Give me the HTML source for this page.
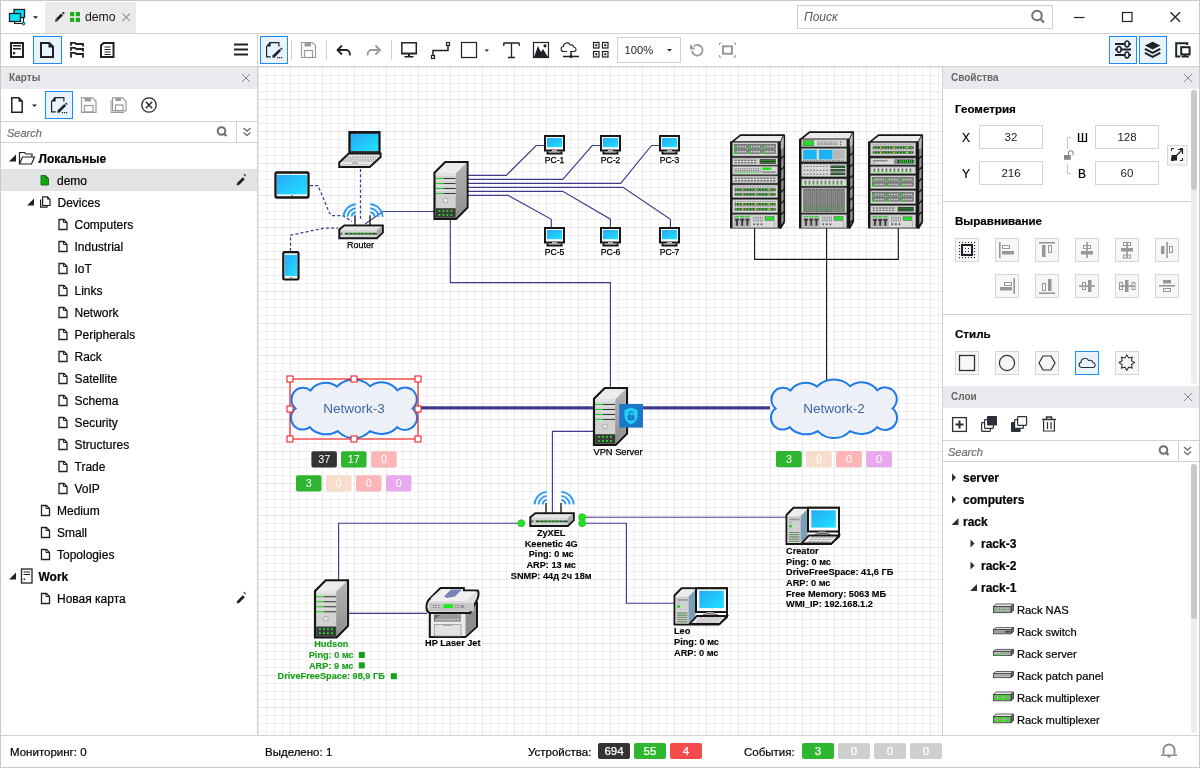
<!DOCTYPE html>
<html><head><meta charset="utf-8">
<style>
*{box-sizing:border-box;margin:0;padding:0}
html,body{width:1200px;height:768px;overflow:hidden;background:#fff}
body{will-change:transform;position:relative;font-family:"Liberation Sans",sans-serif;color:#1b1b1b;font-size:12px}
.a{position:absolute}
svg.a{overflow:visible}
.hl{position:absolute;height:1px;background:#d2d2d2}
.vl{position:absolute;width:1px;background:#d2d2d2}
.btnsel{position:absolute;border:1px solid #1a8cff;background:#e9f3fd}
.ph{position:absolute;background:#e8eaed;height:22px;font-weight:bold;font-size:10px;color:#666;line-height:22px;padding-left:8px}
.t{position:absolute;white-space:nowrap;font-size:12px;line-height:14px;color:#000;-webkit-text-stroke-width:0.2px}
.badge{position:absolute;height:16px;border-radius:2px;color:#fff;font-size:11.5px;line-height:17px;text-align:center;-webkit-text-stroke-width:0.25px}
#canvas{position:absolute;left:258px;top:67px;width:684px;height:668px;overflow:hidden;
background-color:#fff;
background-image:linear-gradient(to right,rgba(0,0,0,.03) 1px,transparent 1px),linear-gradient(to bottom,rgba(0,0,0,.03) 1px,transparent 1px),linear-gradient(to right,rgba(0,0,0,.05) 1px,transparent 1px),linear-gradient(to bottom,rgba(0,0,0,.05) 1px,transparent 1px);
background-size:32px 32px,32px 32px,8px 8px,8px 8px}
</style></head><body>
<!-- window border -->
<div class="a" style="left:0;top:0;width:1200px;height:768px;border:1px solid #c9c9c9;z-index:50;pointer-events:none"></div>

<!-- ===== title bar ===== -->
<div class="hl" style="left:0;top:33px;width:1200px"></div>
<svg class="a" style="left:0;top:0" width="45" height="33">
 <rect x="14" y="9.5" width="10.5" height="8" fill="#00e5ff" stroke="#1b1b1b" stroke-width="1.3"/>
 <rect x="9.5" y="13.5" width="11" height="8" fill="#00e5ff" stroke="#1b1b1b" stroke-width="1.3"/>
 <path d="M23.5 18v5.5H14.5V22" fill="none" stroke="#1b1b1b" stroke-width="1.1"/>
 <circle cx="23.5" cy="23.5" r="1.4" fill="#00e5ff" stroke="#1b1b1b" stroke-width="0.8"/>
 <path d="M33 16.2h5l-2.5 2.6z" fill="#1b1b1b"/>
</svg>
<div class="a" style="left:45px;top:2px;width:91px;height:31px;background:#ebebeb"></div>
<svg class="a" style="left:45px;top:2px" width="91" height="31">
 <path d="M12 17.5L17 12.5" stroke="#1e2228" stroke-width="2.7"/>
 <path d="M10 19.8L10.8 16.6L13.2 19Z" fill="#1e2228"/>
 <path d="M17.8 11.7L19 10.5" stroke="#1e2228" stroke-width="2.4"/>
 <rect x="25" y="10" width="4.2" height="4.2" fill="#1aab1a"/><rect x="30.8" y="10" width="4.2" height="4.2" fill="#1aab1a"/>
 <rect x="25" y="15.8" width="4.2" height="4.2" fill="#1aab1a"/><rect x="30.8" y="15.8" width="4.2" height="4.2" fill="#1aab1a"/>
 <path d="M77.5 11.5l7.5 7.5M85 11.5l-7.5 7.5" stroke="#9a9a9a" stroke-width="1.1"/>
</svg>
<div class="a" style="left:85px;top:8.8px;font-size:12.2px;line-height:16px;color:#111">demo</div>
<div class="a" style="left:797px;top:5px;width:256px;height:24px;border:1px solid #cfcfcf;background:#fff"></div>
<div class="a" style="left:804px;top:10px;font-size:12px;line-height:14px;color:#555;font-style:italic">Поиск</div>
<svg class="a" style="left:1020px;top:0" width="180" height="33">
 <circle cx="17" cy="15.5" r="4.8" fill="none" stroke="#707070" stroke-width="2"/>
 <path d="M20.5 19l3.5 3.5" stroke="#707070" stroke-width="2.2"/>
 <path d="M54 17.5h10.5" stroke="#1e2228" stroke-width="1.2"/>
 <rect x="102.5" y="12.5" width="9.5" height="9" fill="none" stroke="#1e2228" stroke-width="1.2"/>
 <path d="M150.5 12.2l9.5 9.5M160 12.2l-9.5 9.5" stroke="#1e2228" stroke-width="1.3"/>
</svg>

<!-- ===== toolbar ===== -->
<div class="hl" style="left:0;top:66px;width:1200px"></div>
<div class="vl" style="left:257px;top:33px;height:703px"></div>
<div class="vl" style="left:942px;top:66px;height:670px"></div>
<div class="btnsel" style="left:33px;top:36px;width:29px;height:28px"></div>
<svg class="a" style="left:0;top:34px" width="257" height="32">
 <g fill="none" stroke="#1e2228" stroke-width="2">
  <rect x="11" y="9" width="12" height="14"/>
 </g>
 <path d="M13 11h8v1.6h-8zM13 14h8v1.6h-8zM13 18h2.2v2.2h-2.2z" fill="#1e2228"/>
 <path d="M41 9h8l4 4v10h-12z" fill="none" stroke="#1e2228" stroke-width="2"/>
 <path d="M48.5 8.5h1.5l3.5 3.5v1.5h-5z" fill="#1e2228"/>
 <path d="M71 11.8V8.9H75L76.2 10H83V12.6M71 16.8V13.9H75L76.2 15H83V17.6M71 23.8V18.9H75L76.2 20H83V23.8" fill="none" stroke="#1e2228" stroke-width="1.8"/>
 <path d="M103.5 9h10v14h-12.5v-11.5z" fill="none" stroke="#1e2228" stroke-width="2"/>
 <path d="M104.5 13h6M104.5 15.5h6M104.5 18h6M104.5 20.5h6" stroke="#1e2228" stroke-width="1"/>
 <path d="M234 10.5h14M234 15.5h14M234 20.5h14" stroke="#1e2228" stroke-width="2"/>
</svg>
<div class="btnsel" style="left:260px;top:36px;width:28px;height:28px"></div>
<svg class="a" style="left:258px;top:34px" width="684" height="32">
 <!-- edit doc -->
 <path d="M8.6 12V22.9H12.7M11.5 8.6H20.9V12.6" fill="none" stroke="#1e2228" stroke-width="1.15"/>
 <path d="M8.1 12.2L11.7 8.1H12.6V12.6H8.1Z" fill="#1e2228"/>
 <path d="M15.3 22.8L22.2 15.9" stroke="#1e2228" stroke-width="2.7"/>
 <path d="M14.3 23.8L14.6 21.5L16.6 23.5Z" fill="#1e2228"/>
 <path d="M22.9 15.2L23.9 14.2" stroke="#1e2228" stroke-width="2.2"/>
 <path d="M19 23h1.2v1.2h-1.2zM21 23h1.2v1.2h-1.2zM23 23h1.2v1.2h-1.2z" fill="#1e2228"/>
 <!-- seps -->
 <path d="M33.5 6v20M68.5 6v20M133.5 6v20" stroke="#cfcfcf" stroke-width="1"/>
 <!-- save -->
 <path d="M43.5 8.5h11l3 3v12h-14z" fill="none" stroke="#9a9a9a" stroke-width="1.2"/>
 <rect x="46.5" y="8.5" width="6.5" height="4" fill="#9a9a9a"/>
 <rect x="46.5" y="16.5" width="8" height="7" fill="none" stroke="#9a9a9a" stroke-width="1.2"/>
 <!-- undo -->
 <path d="M84 11.5l-4.5 4.5 4.5 4.5" fill="none" stroke="#1e2228" stroke-width="1.8"/>
 <path d="M79.5 16h8.5a3.8 3.8 0 0 1 3.8 3.8v1.8" fill="none" stroke="#1e2228" stroke-width="1.8"/>
 <!-- redo -->
 <path d="M117.5 11.5l4.5 4.5-4.5 4.5" fill="none" stroke="#9a9a9a" stroke-width="1.8"/>
 <path d="M122 16h-8.5a3.8 3.8 0 0 0-3.8 3.8v1.8" fill="none" stroke="#9a9a9a" stroke-width="1.8"/>
 <!-- monitor -->
 <rect x="143.8" y="8.8" width="14.5" height="10.5" fill="none" stroke="#1e2228" stroke-width="1.5"/>
 <path d="M143 19h16v1.5h-16zM150 20h2v2h-2zM146.5 22h9v1.6h-9z" fill="#1e2228"/>
 <!-- connector -->
 <rect x="188.5" y="8.5" width="3" height="3" fill="none" stroke="#1e2228" stroke-width="1.2"/>
 <rect x="173.5" y="21.5" width="3" height="3" fill="none" stroke="#1e2228" stroke-width="1.2"/>
 <path d="M190 12v4.5h-15v5" fill="none" stroke="#1e2228" stroke-width="1.5"/>
 <!-- rect -->
 <rect x="203.5" y="8.5" width="15" height="15" fill="none" stroke="#1e2228" stroke-width="1.2"/>
 <path d="M226.5 15.5h4.5l-2.25 2.3z" fill="#1e2228"/>
 <!-- T -->
 <path d="M245.5 9h16M253.5 9v14.5M250 23.5h7M245.8 9v3M261.2 9v3" fill="none" stroke="#1e2228" stroke-width="1.3"/>
 <!-- image -->
 <rect x="275.5" y="8.5" width="15" height="15" fill="none" stroke="#1e2228" stroke-width="1.2"/>
 <path d="M276 23l4-11 3 6 2-3 5 8z" fill="#1e2228"/>
 <circle cx="287" cy="11.8" r="1.6" fill="#1e2228"/>
 <!-- cloud net -->
 <path d="M309 17.5h-3.2a2.5 2.5 0 0 1-0.3-5 3.5 3.5 0 0 1 6.7-1.5 2.8 2.8 0 0 1 3.6 2.3 2.1 2.1 0 0 1 0.2 4.2h-3.2" fill="none" stroke="#1e2228" stroke-width="1.1"/>
 <path d="M305 22.5h16M313 17v5.5" stroke="#1e2228" stroke-width="1.5"/>
 <circle cx="313" cy="22.5" r="1.5" fill="#1e2228"/>
 <!-- grid -->
 <g fill="none" stroke="#1e2228" stroke-width="1.2">
  <rect x="335.5" y="8.5" width="5.5" height="5.5"/><rect x="344.5" y="8.5" width="5.5" height="5.5"/>
  <rect x="335.5" y="17.5" width="5.5" height="5.5"/><rect x="344.5" y="17.5" width="5.5" height="5.5"/>
 </g>
 <path d="M337.3 10.3h2v2h-2zM346.3 10.3h2v2h-2zM337.3 19.3h2v2h-2zM346.3 19.3h2v2h-2z" fill="#1e2228"/>
 <!-- rotate -->
 <path d="M434 17a5.3 5.3 0 1 0 1.8-4.8" fill="none" stroke="#9a9a9a" stroke-width="1.8"/>
 <path d="M432 10v5.5h5.5z" fill="#9a9a9a"/>
 <!-- fit -->
 <path d="M461.5 11v-2h2M475.5 9h2v2M477.5 21v2h-2M463.5 23h-2v-2" fill="none" stroke="#9a9a9a" stroke-width="1"/>
 <rect x="465" y="12.3" width="9" height="7.4" fill="none" stroke="#9a9a9a" stroke-width="2"/>
</svg>
<div class="a" style="left:617px;top:37px;width:64px;height:26px;border:1px solid #cfcfcf;background:#fff"></div>
<div class="a" style="left:624.5px;top:43px;font-size:11.2px;line-height:15px;color:#222">100%</div>
<svg class="a" style="left:660px;top:44px" width="20" height="10"><path d="M7 5h5l-2.5 2.5z" fill="#1e2228"/></svg>
<div class="btnsel" style="left:1109px;top:36px;width:28px;height:28px"></div>
<div class="btnsel" style="left:1139px;top:36px;width:28px;height:28px"></div>
<svg class="a" style="left:1100px;top:34px" width="100" height="32">
 <path d="M15 10H31M15 15.5H31M15 21H31" stroke="#1e2228" stroke-width="1.8"/>
 <ellipse cx="27" cy="10" rx="2.1" ry="2.9" fill="#e9f3fd" stroke="#1e2228" stroke-width="1.5"/>
 <ellipse cx="19" cy="15.5" rx="2.1" ry="2.9" fill="#e9f3fd" stroke="#1e2228" stroke-width="1.5"/>
 <ellipse cx="27" cy="21" rx="2.1" ry="2.9" fill="#e9f3fd" stroke="#1e2228" stroke-width="1.5"/>
 <path d="M44.9 11.4L52.6 7.8L60.3 11.4L52.6 15.4Z" fill="#1e2228"/>
 <path d="M44.9 14.9L52.6 18.9L60.3 14.9M44.9 18.9L52.6 22.9L60.3 18.9" fill="none" stroke="#1e2228" stroke-width="2"/>
 <path d="M80.2 22.6H76.2V9.2H87.2V11" fill="none" stroke="#1e2228" stroke-width="2"/>
 <rect x="81.2" y="13.2" width="8.4" height="7.2" fill="none" stroke="#1e2228" stroke-width="2"/>
 <path d="M85 20.6V22M81.5 22.6H88.8" fill="none" stroke="#1e2228" stroke-width="2"/>
</svg>
<!-- left panel -->
<div class="ph" style="left:1px;top:67px;width:256px">Карты</div>
<div class="btnsel" style="left:45px;top:91px;width:28px;height:28px"></div>
<svg class="a" style="left:0;top:89px" width="257" height="33">
 <path d="M11.8 8.8h7l3.4 3.4v11h-10.4z" fill="none" stroke="#1e2228" stroke-width="1.5"/>
 <path d="M18.5 8.5h0.6l3.3 3.3v0.9h-3.9z" fill="#1e2228"/>
 <path d="M32 15.5h5l-2.5 2.5z" fill="#1e2228"/>
 <path d="M51.6 12V22.9H55.7M54.5 8.6H63.9V12.6" fill="none" stroke="#1e2228" stroke-width="1.15"/>
 <path d="M51.1 12.2L54.7 8.1H55.6V12.6H51.1Z" fill="#1e2228"/>
 <path d="M58.3 22.8L65.2 15.9" stroke="#1e2228" stroke-width="2.7"/>
 <path d="M57.3 23.8L57.6 21.5L59.6 23.5Z" fill="#1e2228"/>
 <path d="M65.9 15.2L66.9 14.2" stroke="#1e2228" stroke-width="2.2"/>
 <path d="M62 23h1.2v1.2h-1.2zM64 23h1.2v1.2h-1.2zM66 23h1.2v1.2h-1.2z" fill="#1e2228"/>
 <path d="M81.5 8.8h11l3.5 3.5v11h-14.5z" fill="none" stroke="#9a9a9a" stroke-width="1.2"/>
 <rect x="84.5" y="9" width="6.5" height="3.5" fill="#9a9a9a"/>
 <rect x="84.5" y="16.5" width="8.5" height="6.5" fill="none" stroke="#9a9a9a" stroke-width="1.2"/>
 <path d="M112.5 8.8h10l3.5 3.5v9.5h-13.5z" fill="none" stroke="#9a9a9a" stroke-width="1.2"/>
 <path d="M111 11v12.5h13" fill="none" stroke="#9a9a9a" stroke-width="1"/>
 <rect x="115.5" y="9" width="5.5" height="3" fill="#9a9a9a"/>
 <rect x="115.5" y="16" width="7.5" height="5.5" fill="none" stroke="#9a9a9a" stroke-width="1.2"/>
 <circle cx="149" cy="16" r="7.2" fill="none" stroke="#1e2228" stroke-width="1.3"/>
 <path d="M145.8 12.8l6.4 6.4M152.2 12.8l-6.4 6.4" stroke="#1e2228" stroke-width="1.4"/>
</svg>
<div class="hl" style="left:1px;top:121px;width:256px"></div>
<div class="t" style="left:7px;top:126px;font-style:italic;color:#6e6e6e;font-size:11px">Search</div>
<svg class="a" style="left:200px;top:122px" width="57" height="21">
 <circle cx="21.5" cy="9" r="3.8" fill="none" stroke="#6f6f6f" stroke-width="2"/>
 <path d="M24 11.5l2.5 2.5" stroke="#6f6f6f" stroke-width="2.2"/>
 <path d="M36.5 0v21" stroke="#d2d2d2" stroke-width="1"/>
 <path d="M43.5 6l3.5 3 3.5-3M43.5 10.5l3.5 3 3.5-3" fill="none" stroke="#6f6f6f" stroke-width="1.4"/>
</svg>
<div class="hl" style="left:1px;top:142px;width:256px"></div>
<div class="a" style="left:1px;top:169px;width:256px;height:22px;background:#e3e3e3"></div>
<div class="t" style="left:38.5px;top:152px;font-weight:bold;">Локальные</div>
<div class="t" style="left:57px;top:174px;">demo</div>
<div class="t" style="left:57.5px;top:196px;">Devices</div>
<div class="t" style="left:74.5px;top:218px;">Computers</div>
<div class="t" style="left:74.5px;top:240px;">Industrial</div>
<div class="t" style="left:74.5px;top:262px;">IoT</div>
<div class="t" style="left:74.5px;top:284px;">Links</div>
<div class="t" style="left:74.5px;top:306px;">Network</div>
<div class="t" style="left:74.5px;top:328px;">Peripherals</div>
<div class="t" style="left:74.5px;top:350px;">Rack</div>
<div class="t" style="left:74.5px;top:372px;">Satellite</div>
<div class="t" style="left:74.5px;top:394px;">Schema</div>
<div class="t" style="left:74.5px;top:416px;">Security</div>
<div class="t" style="left:74.5px;top:438px;">Structures</div>
<div class="t" style="left:74.5px;top:460px;">Trade</div>
<div class="t" style="left:74.5px;top:482px;">VoIP</div>
<div class="t" style="left:57px;top:504px;">Medium</div>
<div class="t" style="left:57px;top:526px;">Small</div>
<div class="t" style="left:57px;top:548px;">Topologies</div>
<div class="t" style="left:38.5px;top:570px;font-weight:bold;">Work</div>
<div class="t" style="left:57px;top:592px;">Новая карта</div>
<svg class="a" style="left:0;top:0" width="257" height="735"><path d="M9 161.5h7v-7z" fill="#1e2228"/><path d="M19.5 164v-11.5h5l1.5 1.5h6v3" fill="none" stroke="#1e2228" stroke-width="1.2"/><path d="M19.5 164l3-7h12l-3 7z" fill="none" stroke="#1e2228" stroke-width="1.2"/><path d="M41 175.5h4.6l2.9 2.9v6.6h-7.5z" fill="#0fa80f" stroke="#136b13" stroke-width="0.9"/><path d="M45.4 175.3l3.3 3.3h-3.3z" fill="#136b13"/><path d="M27 205.5h7v-7z" fill="#1e2228"/><path d="M40.6 199.5v7.6h6.4v-1.6" fill="none" stroke="#1e2228" stroke-width="1.2"/><path d="M42.6 196.8h4.8l2.6 2.6v6.1h-7.4z" fill="#fff" stroke="#1e2228" stroke-width="1.2"/><path d="M47.2 196.6l2.9 2.9h-2.9z" fill="#1e2228"/><path d="M59.0 219.5h5l3 3v7h-8z" fill="none" stroke="#1e2228" stroke-width="1.3"/><path d="M63.5 219.5v3h3.5" fill="none" stroke="#1e2228" stroke-width="1"/><path d="M59.0 241.5h5l3 3v7h-8z" fill="none" stroke="#1e2228" stroke-width="1.3"/><path d="M63.5 241.5v3h3.5" fill="none" stroke="#1e2228" stroke-width="1"/><path d="M59.0 263.5h5l3 3v7h-8z" fill="none" stroke="#1e2228" stroke-width="1.3"/><path d="M63.5 263.5v3h3.5" fill="none" stroke="#1e2228" stroke-width="1"/><path d="M59.0 285.5h5l3 3v7h-8z" fill="none" stroke="#1e2228" stroke-width="1.3"/><path d="M63.5 285.5v3h3.5" fill="none" stroke="#1e2228" stroke-width="1"/><path d="M59.0 307.5h5l3 3v7h-8z" fill="none" stroke="#1e2228" stroke-width="1.3"/><path d="M63.5 307.5v3h3.5" fill="none" stroke="#1e2228" stroke-width="1"/><path d="M59.0 329.5h5l3 3v7h-8z" fill="none" stroke="#1e2228" stroke-width="1.3"/><path d="M63.5 329.5v3h3.5" fill="none" stroke="#1e2228" stroke-width="1"/><path d="M59.0 351.5h5l3 3v7h-8z" fill="none" stroke="#1e2228" stroke-width="1.3"/><path d="M63.5 351.5v3h3.5" fill="none" stroke="#1e2228" stroke-width="1"/><path d="M59.0 373.5h5l3 3v7h-8z" fill="none" stroke="#1e2228" stroke-width="1.3"/><path d="M63.5 373.5v3h3.5" fill="none" stroke="#1e2228" stroke-width="1"/><path d="M59.0 395.5h5l3 3v7h-8z" fill="none" stroke="#1e2228" stroke-width="1.3"/><path d="M63.5 395.5v3h3.5" fill="none" stroke="#1e2228" stroke-width="1"/><path d="M59.0 417.5h5l3 3v7h-8z" fill="none" stroke="#1e2228" stroke-width="1.3"/><path d="M63.5 417.5v3h3.5" fill="none" stroke="#1e2228" stroke-width="1"/><path d="M59.0 439.5h5l3 3v7h-8z" fill="none" stroke="#1e2228" stroke-width="1.3"/><path d="M63.5 439.5v3h3.5" fill="none" stroke="#1e2228" stroke-width="1"/><path d="M59.0 461.5h5l3 3v7h-8z" fill="none" stroke="#1e2228" stroke-width="1.3"/><path d="M63.5 461.5v3h3.5" fill="none" stroke="#1e2228" stroke-width="1"/><path d="M59.0 483.5h5l3 3v7h-8z" fill="none" stroke="#1e2228" stroke-width="1.3"/><path d="M63.5 483.5v3h3.5" fill="none" stroke="#1e2228" stroke-width="1"/><path d="M41.5 505.5h5l3 3v7h-8z" fill="none" stroke="#1e2228" stroke-width="1.3"/><path d="M46 505.5v3h3.5" fill="none" stroke="#1e2228" stroke-width="1"/><path d="M41.5 527.5h5l3 3v7h-8z" fill="none" stroke="#1e2228" stroke-width="1.3"/><path d="M46 527.5v3h3.5" fill="none" stroke="#1e2228" stroke-width="1"/><path d="M41.5 549.5h5l3 3v7h-8z" fill="none" stroke="#1e2228" stroke-width="1.3"/><path d="M46 549.5v3h3.5" fill="none" stroke="#1e2228" stroke-width="1"/><path d="M9 579.5h7v-7z" fill="#1e2228"/><rect x="21.5" y="569" width="10.5" height="14" fill="none" stroke="#1e2228" stroke-width="1.3"/><path d="M23.5 572h6.5M23.5 574.5h6.5" stroke="#1e2228" stroke-width="1.2"/><rect x="23.5" y="578.5" width="1.6" height="1.6" fill="#1e2228"/><path d="M41.5 593.5h5l3 3v7h-8z" fill="none" stroke="#1e2228" stroke-width="1.3"/><path d="M46 593.5v3h3.5" fill="none" stroke="#1e2228" stroke-width="1"/><path d="M236.5 185.5l0.8-2.8 5.5-5.5 2 2-5.5 5.5z" fill="#1e2228"/><path d="M243.5 174.5l0.7-0.7 2 2-0.7 0.7z" fill="#1e2228"/><path d="M236.5 603.5l0.8-2.8 5.5-5.5 2 2-5.5 5.5z" fill="#1e2228"/><path d="M243.5 592.5l0.7-0.7 2 2-0.7 0.7z" fill="#1e2228"/></svg>
<div id="canvas"></div>
<svg class="a" style="left:258px;top:67px" width="684" height="668" viewBox="258 67 684 668">
<defs>
<linearGradient id="scr" x1="0" y1="0" x2="1" y2="1"><stop offset="0" stop-color="#27a9f9"/><stop offset="1" stop-color="#1fe3ff"/></linearGradient>
<linearGradient id="side" x1="0" y1="0" x2="0" y2="1"><stop offset="0" stop-color="#b4b4b4"/><stop offset="1" stop-color="#8e8e8e"/></linearGradient>
</defs>
<path d="M365 224L383 211.5H434.5" fill="none" stroke="#3d3b8e" stroke-width="1.15"/>
<path d="M360.5 169V221" fill="none" stroke="#3d3b8e" stroke-width="1.25" stroke-dasharray="3 2.2"/>
<path d="M310 185.5H318L329 212L331.5 215.5H342.5L352 221.5" fill="none" stroke="#3d3b8e" stroke-width="1.25" stroke-dasharray="3 2.2"/>
<path d="M290.5 251V235.2L323.7 228.2H338" fill="none" stroke="#3d3b8e" stroke-width="1.25" stroke-dasharray="3 2.2"/>
<path d="M468 175.3H506.3L536.2 145.5H544" fill="none" stroke="#3d3b8e" stroke-width="1.15"/>
<path d="M468 179.3H562.8L592.2 145.5H600" fill="none" stroke="#3d3b8e" stroke-width="1.15"/>
<path d="M468 183.3H620.7L651.5 145.5H659" fill="none" stroke="#3d3b8e" stroke-width="1.15"/>
<path d="M468 187.3H623L670.4 219.2V227" fill="none" stroke="#3d3b8e" stroke-width="1.15"/>
<path d="M468 191.3H562.7L610.4 219.2V227" fill="none" stroke="#3d3b8e" stroke-width="1.15"/>
<path d="M468 195.3H508L551.3 219.3V227" fill="none" stroke="#3d3b8e" stroke-width="1.15"/>
<path d="M450.3 219V282.6H610.4V388" fill="none" stroke="#3d3b8e" stroke-width="1.15"/>
<path d="M754.6 228V259.3H898.3V228M826.6 228V380" fill="none" stroke="#161616" stroke-width="1.15"/>
<path d="M418 407.8H770" fill="none" stroke="#3d3b8e" stroke-width="3.2"/>
<path d="M594 431.3H552.4V513" fill="none" stroke="#3d3b8e" stroke-width="1.15"/>
<path d="M521 523.2H338.6V580" fill="none" stroke="#3d3b8e" stroke-width="1.15"/>
<path d="M336 613.3H427" fill="none" stroke="#3d3b8e" stroke-width="1.15"/>
<path d="M582 517.2H787" fill="none" stroke="#3d3b8e" stroke-width="1.15"/>
<path d="M582 523.2H626.4V603.2H675" fill="none" stroke="#3d3b8e" stroke-width="1.15"/>
<g transform="translate(433.5,161)">
 <path d="M1 11.8L11.8 1H34V46.6L22.6 58H1Z" fill="#d2d2d2" stroke="#161616" stroke-width="2.2" stroke-linejoin="miter"/>
 <path d="M2.2 12.5L12.3 2.3H32.2L22.2 12.5Z" fill="#ececec"/>
 <path d="M22.2 12.5L32.8 2.3V46L22.2 56.6Z" fill="url(#side)"/>
 <rect x="2.2" y="12.5" width="20" height="2.5" fill="#e2e2e2"/>
 <g stroke-width="1.1">
  <path d="M2.2 17.5H10M2.2 22.5H10M2.2 27.5H10M2.2 32.5H10" stroke="#1bd51b"/>
  <path d="M10 17.5H22M10 22.5H22M10 27.5H22M10 32.5H22" stroke="#3a3a3a"/>
 </g>
 <path d="M2.2 19.5H22M2.2 24.5H22M2.2 29.5H22" stroke="#e0e0e0" stroke-width="1.2"/>
 <circle cx="12" cy="39.5" r="2.4" fill="#e8e8e8" stroke="#9a9a9a" stroke-width="0.8"/>
 <rect x="2.2" y="47.2" width="20" height="9.6" fill="#3a3a3a"/>
 <g fill="#22e322">
  <rect x="5" y="49" width="1.8" height="1.8"/><rect x="9" y="49" width="1.8" height="1.8"/><rect x="13" y="49" width="1.8" height="1.8"/><rect x="17" y="49" width="1.8" height="1.8"/>
  <rect x="5" y="53" width="1.8" height="1.8"/><rect x="9" y="53" width="1.8" height="1.8"/><rect x="13" y="53" width="1.8" height="1.8"/><rect x="17" y="53" width="1.8" height="1.8"/>
 </g></g>
<g transform="translate(593,387)">
 <path d="M1 11.8L11.8 1H34V46.6L22.6 58H1Z" fill="#d2d2d2" stroke="#161616" stroke-width="2.2" stroke-linejoin="miter"/>
 <path d="M2.2 12.5L12.3 2.3H32.2L22.2 12.5Z" fill="#ececec"/>
 <path d="M22.2 12.5L32.8 2.3V46L22.2 56.6Z" fill="url(#side)"/>
 <rect x="2.2" y="12.5" width="20" height="2.5" fill="#e2e2e2"/>
 <g stroke-width="1.1">
  <path d="M2.2 17.5H10M2.2 22.5H10M2.2 27.5H10M2.2 32.5H10" stroke="#1bd51b"/>
  <path d="M10 17.5H22M10 22.5H22M10 27.5H22M10 32.5H22" stroke="#3a3a3a"/>
 </g>
 <path d="M2.2 19.5H22M2.2 24.5H22M2.2 29.5H22" stroke="#e0e0e0" stroke-width="1.2"/>
 <circle cx="12" cy="39.5" r="2.4" fill="#e8e8e8" stroke="#9a9a9a" stroke-width="0.8"/>
 <rect x="2.2" y="47.2" width="20" height="9.6" fill="#3a3a3a"/>
 <g fill="#22e322">
  <rect x="5" y="49" width="1.8" height="1.8"/><rect x="9" y="49" width="1.8" height="1.8"/><rect x="13" y="49" width="1.8" height="1.8"/><rect x="17" y="49" width="1.8" height="1.8"/>
  <rect x="5" y="53" width="1.8" height="1.8"/><rect x="9" y="53" width="1.8" height="1.8"/><rect x="13" y="53" width="1.8" height="1.8"/><rect x="17" y="53" width="1.8" height="1.8"/>
 </g></g>
<g transform="translate(314,579.3)">
 <path d="M1 11.8L11.8 1H34V46.6L22.6 58H1Z" fill="#d2d2d2" stroke="#161616" stroke-width="2.2" stroke-linejoin="miter"/>
 <path d="M2.2 12.5L12.3 2.3H32.2L22.2 12.5Z" fill="#ececec"/>
 <path d="M22.2 12.5L32.8 2.3V46L22.2 56.6Z" fill="url(#side)"/>
 <rect x="2.2" y="12.5" width="20" height="2.5" fill="#e2e2e2"/>
 <g stroke-width="1.1">
  <path d="M2.2 17.5H10M2.2 22.5H10M2.2 27.5H10M2.2 32.5H10" stroke="#1bd51b"/>
  <path d="M10 17.5H22M10 22.5H22M10 27.5H22M10 32.5H22" stroke="#3a3a3a"/>
 </g>
 <path d="M2.2 19.5H22M2.2 24.5H22M2.2 29.5H22" stroke="#e0e0e0" stroke-width="1.2"/>
 <circle cx="12" cy="39.5" r="2.4" fill="#e8e8e8" stroke="#9a9a9a" stroke-width="0.8"/>
 <rect x="2.2" y="47.2" width="20" height="9.6" fill="#3a3a3a"/>
 <g fill="#22e322">
  <rect x="5" y="49" width="1.8" height="1.8"/><rect x="9" y="49" width="1.8" height="1.8"/><rect x="13" y="49" width="1.8" height="1.8"/><rect x="17" y="49" width="1.8" height="1.8"/>
  <rect x="5" y="53" width="1.8" height="1.8"/><rect x="9" y="53" width="1.8" height="1.8"/><rect x="13" y="53" width="1.8" height="1.8"/><rect x="17" y="53" width="1.8" height="1.8"/>
 </g></g>
<g transform="translate(544,135)">
 <rect x="1" y="1" width="19" height="14.5" fill="#fff" stroke="#161616" stroke-width="2"/>
 <rect x="3" y="3" width="15" height="9.2" fill="url(#scr)"/>
 <path d="M3.5 16.5V18.5H17.5V16.5" fill="none" stroke="#161616" stroke-width="2"/>
 <rect x="8" y="15" width="5" height="1.6" fill="#bdbdbd"/></g>
<g transform="translate(600,135)">
 <rect x="1" y="1" width="19" height="14.5" fill="#fff" stroke="#161616" stroke-width="2"/>
 <rect x="3" y="3" width="15" height="9.2" fill="url(#scr)"/>
 <path d="M3.5 16.5V18.5H17.5V16.5" fill="none" stroke="#161616" stroke-width="2"/>
 <rect x="8" y="15" width="5" height="1.6" fill="#bdbdbd"/></g>
<g transform="translate(659,135)">
 <rect x="1" y="1" width="19" height="14.5" fill="#fff" stroke="#161616" stroke-width="2"/>
 <rect x="3" y="3" width="15" height="9.2" fill="url(#scr)"/>
 <path d="M3.5 16.5V18.5H17.5V16.5" fill="none" stroke="#161616" stroke-width="2"/>
 <rect x="8" y="15" width="5" height="1.6" fill="#bdbdbd"/></g>
<g transform="translate(544,227)">
 <rect x="1" y="1" width="19" height="14.5" fill="#fff" stroke="#161616" stroke-width="2"/>
 <rect x="3" y="3" width="15" height="9.2" fill="url(#scr)"/>
 <path d="M3.5 16.5V18.5H17.5V16.5" fill="none" stroke="#161616" stroke-width="2"/>
 <rect x="8" y="15" width="5" height="1.6" fill="#bdbdbd"/></g>
<g transform="translate(600,227)">
 <rect x="1" y="1" width="19" height="14.5" fill="#fff" stroke="#161616" stroke-width="2"/>
 <rect x="3" y="3" width="15" height="9.2" fill="url(#scr)"/>
 <path d="M3.5 16.5V18.5H17.5V16.5" fill="none" stroke="#161616" stroke-width="2"/>
 <rect x="8" y="15" width="5" height="1.6" fill="#bdbdbd"/></g>
<g transform="translate(659,227)">
 <rect x="1" y="1" width="19" height="14.5" fill="#fff" stroke="#161616" stroke-width="2"/>
 <rect x="3" y="3" width="15" height="9.2" fill="url(#scr)"/>
 <path d="M3.5 16.5V18.5H17.5V16.5" fill="none" stroke="#161616" stroke-width="2"/>
 <rect x="8" y="15" width="5" height="1.6" fill="#bdbdbd"/></g>
<g transform="translate(785.5,506.5)">
 <path d="M1 8.5L8 1.3H53.5V25H53.5V30L45.3 37.5H1Z" fill="#fff" stroke="#161616" stroke-width="2"/>
 <path d="M2.5 9L9 2.5H22L15 9.5Z" fill="#ececec"/>
 <rect x="2.2" y="9.5" width="12.8" height="26.8" fill="#d0d0d0"/>
 <path d="M15 9.5L22 2.5V35L15 36.5Z" fill="#7d9fb6"/>
 <rect x="4" y="12" width="10" height="1.8" fill="#9a9a9a"/>
 <rect x="4" y="15.5" width="2" height="0.8" fill="#9a9a9a"/>
 <circle cx="5" cy="19.5" r="1.5" fill="#15d015"/>
 <path d="M3.5 26H14M3.5 28.2H14M3.5 30.4H14M3.5 32.6H14M3.5 34.8H14" stroke="#6a6a6a" stroke-width="0.9"/>
 <path d="M7.3 25.6V35.2M9.6 25.6V35.2" stroke="#22e022" stroke-width="1.1" stroke-dasharray="0.9 1.3"/>
 <rect x="22.5" y="1.3" width="31" height="23.7" fill="#fff" stroke="#161616" stroke-width="2"/>
 <rect x="25.8" y="3.8" width="24.5" height="17.3" fill="url(#scr)"/>
 <rect x="33" y="25" width="7" height="3" fill="#b0b0b0"/>
 <ellipse cx="37" cy="28.5" rx="8" ry="1.6" fill="#e4e4e4" stroke="#2a2a2a" stroke-width="0.8"/>
 <path d="M16 37L23.5 29H53.5L46 37Z" fill="#e8e8e8" stroke="#161616" stroke-width="1.8"/>
 <path d="M26 31H48M24.5 33H46M23 35H44" stroke="#a8a8a8" stroke-width="1.2" stroke-dasharray="3 1"/></g>
<g transform="translate(673.5,587)">
 <path d="M1 8.5L8 1.3H53.5V25H53.5V30L45.3 37.5H1Z" fill="#fff" stroke="#161616" stroke-width="2"/>
 <path d="M2.5 9L9 2.5H22L15 9.5Z" fill="#ececec"/>
 <rect x="2.2" y="9.5" width="12.8" height="26.8" fill="#d0d0d0"/>
 <path d="M15 9.5L22 2.5V35L15 36.5Z" fill="#7d9fb6"/>
 <rect x="4" y="12" width="10" height="1.8" fill="#9a9a9a"/>
 <rect x="4" y="15.5" width="2" height="0.8" fill="#9a9a9a"/>
 <circle cx="5" cy="19.5" r="1.5" fill="#15d015"/>
 <path d="M3.5 26H14M3.5 28.2H14M3.5 30.4H14M3.5 32.6H14M3.5 34.8H14" stroke="#6a6a6a" stroke-width="0.9"/>
 <path d="M7.3 25.6V35.2M9.6 25.6V35.2" stroke="#22e022" stroke-width="1.1" stroke-dasharray="0.9 1.3"/>
 <rect x="22.5" y="1.3" width="31" height="23.7" fill="#fff" stroke="#161616" stroke-width="2"/>
 <rect x="25.8" y="3.8" width="24.5" height="17.3" fill="url(#scr)"/>
 <rect x="33" y="25" width="7" height="3" fill="#b0b0b0"/>
 <ellipse cx="37" cy="28.5" rx="8" ry="1.6" fill="#e4e4e4" stroke="#2a2a2a" stroke-width="0.8"/>
 <path d="M16 37L23.5 29H53.5L46 37Z" fill="#e8e8e8" stroke="#161616" stroke-width="1.8"/>
 <path d="M26 31H48M24.5 33H46M23 35H44" stroke="#a8a8a8" stroke-width="1.2" stroke-dasharray="3 1"/></g>
<g>
 <rect x="349.3" y="132" width="30.3" height="22.5" fill="#3a3a3a" stroke="#161616" stroke-width="2"/>
 <rect x="350.8" y="134" width="27.5" height="17" fill="url(#scr)"/>
 <path d="M339.2 162.5L348.8 153.5H380.6V157L369.8 167H339.2Z" fill="#e6e6e6" stroke="#161616" stroke-width="2"/>
 <path d="M347 157H378M345 159H376M343 161H374" stroke="#8a8a8a" stroke-width="0.9" stroke-dasharray="1.6 0.9"/>
 <rect x="352" y="162.5" width="6" height="1" fill="#888"/>
 <path d="M340.2 164.8H369.5" stroke="#bdbdbd" stroke-width="1"/>
</g>
<g>
 <rect x="275.5" y="172.5" width="33" height="25" rx="1.5" fill="#f2f2f2" stroke="#161616" stroke-width="2.3"/>
 <rect x="277" y="175" width="30" height="19.3" fill="url(#scr)"/>
 <rect x="291" y="195.3" width="2" height="0.8" fill="#555"/>
</g>
<g>
 <rect x="283.3" y="252.2" width="15.2" height="27.3" rx="1.2" fill="#f2f2f2" stroke="#161616" stroke-width="2.2"/>
 <rect x="285" y="255" width="12" height="21" fill="url(#scr)"/>
 <rect x="290" y="277.3" width="2" height="0.8" fill="#555"/>
</g>
<g transform="translate(338.3,224.5)">
 <g fill="none" stroke="#2b9cf2" stroke-width="1.9">
  <path d="M5.3 -7.8A13 13 0 0 1 17.5 -20.3"/><path d="M9.3 -7.8A9 9 0 0 1 17.5 -16.3"/><path d="M13.3 -7.8A5 5 0 0 1 17.5 -12.3"/>
  <path d="M44.3 -7.8A13 13 0 0 0 32 -20.3"/><path d="M40.3 -7.8A9 9 0 0 0 32 -16.3"/><path d="M36.3 -7.8A5 5 0 0 0 32 -12.3"/>
 </g>
 <path d="M16.7 -9.3V1M31.7 -9.3V1" stroke="#2e2e2e" stroke-width="1.5"/>
 <path d="M1 5L6 1H44.5V8L38.5 13.8H1Z" fill="#d8d8d8" stroke="#161616" stroke-width="2"/>
 <path d="M2.3 5.5L6.5 2.2H42.5L38.5 5.5Z" fill="#e4e8ec"/>
 <path d="M38.5 5.5L43.3 2.2V8L38.5 12.5Z" fill="#a8a8a8"/>
 <rect x="2.2" y="8.3" width="36.3" height="1.8" fill="#3d3d3d"/>
 <rect x="4" y="8.3" width="2.5" height="1.8" fill="#eee"/>
 <path d="M10 9.2H34" stroke="#22e022" stroke-width="1.8" stroke-dasharray="1.6 2.2"/>
</g>
<g transform="translate(529.3,512.2)">
 <g fill="none" stroke="#2b9cf2" stroke-width="1.9">
  <path d="M5.3 -7.8A13 13 0 0 1 17.5 -20.3"/><path d="M9.3 -7.8A9 9 0 0 1 17.5 -16.3"/><path d="M13.3 -7.8A5 5 0 0 1 17.5 -12.3"/>
  <path d="M44.3 -7.8A13 13 0 0 0 32 -20.3"/><path d="M40.3 -7.8A9 9 0 0 0 32 -16.3"/><path d="M36.3 -7.8A5 5 0 0 0 32 -12.3"/>
 </g>
 <path d="M16.7 -9.3V1M31.7 -9.3V1" stroke="#2e2e2e" stroke-width="1.5"/>
 <path d="M1 5L6 1H44.5V8L38.5 13.8H1Z" fill="#d8d8d8" stroke="#161616" stroke-width="2"/>
 <path d="M2.3 5.5L6.5 2.2H42.5L38.5 5.5Z" fill="#e4e8ec"/>
 <path d="M38.5 5.5L43.3 2.2V8L38.5 12.5Z" fill="#a8a8a8"/>
 <rect x="2.2" y="8.3" width="36.3" height="1.8" fill="#3d3d3d"/>
 <rect x="4" y="8.3" width="2.5" height="1.8" fill="#eee"/>
 <path d="M10 9.2H34" stroke="#22e022" stroke-width="1.8" stroke-dasharray="1.6 2.2"/>
</g>
<circle cx="521.3" cy="523.2" r="3.5" fill="#22e622" stroke="#19b219" stroke-width="0.6"/>
<circle cx="582.2" cy="517.2" r="3.5" fill="#22e622" stroke="#19b219" stroke-width="0.6"/>
<circle cx="582.2" cy="523.2" r="3.5" fill="#22e622" stroke="#19b219" stroke-width="0.6"/>
<g>
 <rect x="619.3" y="404" width="23.7" height="23.6" fill="#1a78c8"/>
 <path d="M631 407.5L637.5 410V416C637.5 420 634.8 422.8 631 424.5 627.2 422.8 624.5 420 624.5 416V410Z" fill="#22d0f5"/>
 <rect x="627.8" y="415" width="6.6" height="5.3" fill="#1a78c8"/>
 <path d="M629.2 415V413.5a1.9 1.9 0 0 1 3.8 0" fill="none" stroke="#1a78c8" stroke-width="1.2"/>
 <path d="M630.5 416.8v1.8l1.6-0.9z" fill="#22d0f5"/>
</g>
<g>
 <path d="M429.8 612.8V637H465.5L477 626.5V603H429.8Z" fill="#e8e8e8" stroke="#161616" stroke-width="2"/>
 <path d="M465.5 613L476 603.5V626L465.5 636Z" fill="#8d8d8d"/>
 <rect x="431" y="614" width="34" height="22" fill="#ebebeb"/>
 <rect x="434" y="614.5" width="27" height="7" fill="#666"/>
 <path d="M435 619L440 615H461V621H435Z" fill="#999"/>
 <path d="M436 619.5H459" stroke="#cfcfcf" stroke-width="1" stroke-dasharray="2 1"/>
 <rect x="434.5" y="624.5" width="26.5" height="11.5" fill="#e2e2e2" stroke="#9a9a9a" stroke-width="0.8"/>
 <rect x="443" y="624.5" width="9" height="1.5" fill="#aaa"/>
 <path d="M426.5 608.5C426 604 427 601 430 598.5L440.5 588H463.8V590.5H477.5C479 591 479 596 477 600L470 613H430C427.5 612 426.8 610.5 426.5 608.5Z" fill="#dedede" stroke="#161616" stroke-width="2"/>
 <path d="M431 598L441 589.3H463V591.5H476L466 601H431Z" fill="#f0f0f0"/>
 <path d="M444 596.5L451 589.5H462L455 596.5L447 598Z" fill="#7a83b5"/>
 <rect x="429" y="603" width="45" height="8.3" fill="#c6c6c6"/>
 <path d="M444 604.3H453.5L452.5 608.3H443Z" fill="#1fe81f"/>
 <path d="M433 605.5H440M433 607.5H440M455 605.5H461M455 607.5H461" stroke="#777" stroke-width="0.8" stroke-dasharray="1.5 1"/>
 <circle cx="462.5" cy="606.5" r="1.5" fill="#888"/>
</g>
<g><path d="M780.5 142.0L784.3 134.8V221.5L780.5 228.5Z" fill="#9c9c9c" stroke="#161616" stroke-width="1.6" stroke-linejoin="bevel"/><path d="M780.5 147.8L784.3 144.3" stroke="#161616" stroke-width="1.4"/><path d="M780.5 159.0L784.3 155.5" stroke="#161616" stroke-width="1.4"/><path d="M780.5 170.20000000000002L784.3 166.70000000000002" stroke="#161616" stroke-width="1.4"/><path d="M780.5 181.4L784.3 177.9" stroke="#161616" stroke-width="1.4"/><path d="M780.5 192.60000000000002L784.3 189.10000000000002" stroke="#161616" stroke-width="1.4"/><path d="M780.5 203.8L784.3 200.3" stroke="#161616" stroke-width="1.4"/><path d="M780.5 215.0L784.3 211.5" stroke="#161616" stroke-width="1.4"/><path d="M780.5 226.2L784.3 222.7" stroke="#161616" stroke-width="1.4"/><path d="M731.5 142.3L740.5 135.10000000000002H784.1L780.5 142.3Z" fill="#ececec" stroke="#161616" stroke-width="1.7" stroke-linejoin="bevel"/><path d="M780.5 142.3L783.7 135.8V147.5L780.5 149.5Z" fill="#b8b8b8"/><rect x="730" y="141.5" width="50.5" height="87.0" fill="#161616"/><rect x="732.7" y="142.7" width="44.9" height="13.300000000000011" fill="#d9d9d9" stroke="#8f8f8f" stroke-width="0.7"/><rect x="734.2" y="144.2" width="13.133333333333333" height="4.150000000000006" fill="#7c7c7c" stroke="#5a5a5a" stroke-width="0.5"/><rect x="734.6" y="146.17499999999998" width="2" height="2.575000000000003" fill="#22e022"/><path d="M737.0 146.47499999999997H746.3333333333334" stroke="#e0e0e0" stroke-width="1.6" stroke-dasharray="0.9 0.7"/><rect x="748.3333333333334" y="144.2" width="13.133333333333333" height="4.150000000000006" fill="#7c7c7c" stroke="#5a5a5a" stroke-width="0.5"/><rect x="748.7333333333333" y="146.17499999999998" width="2" height="2.575000000000003" fill="#22e022"/><path d="M751.1333333333333 146.47499999999997H760.4666666666667" stroke="#e0e0e0" stroke-width="1.6" stroke-dasharray="0.9 0.7"/><rect x="762.4666666666667" y="144.2" width="13.133333333333333" height="4.150000000000006" fill="#7c7c7c" stroke="#5a5a5a" stroke-width="0.5"/><rect x="762.8666666666667" y="146.17499999999998" width="2" height="2.575000000000003" fill="#22e022"/><path d="M765.2666666666667 146.47499999999997H774.6" stroke="#e0e0e0" stroke-width="1.6" stroke-dasharray="0.9 0.7"/><rect x="734.2" y="149.35" width="13.133333333333333" height="4.150000000000006" fill="#7c7c7c" stroke="#5a5a5a" stroke-width="0.5"/><rect x="734.6" y="151.32500000000002" width="2" height="2.575000000000003" fill="#22e022"/><path d="M737.0 151.625H746.3333333333334" stroke="#e0e0e0" stroke-width="1.6" stroke-dasharray="0.9 0.7"/><rect x="748.3333333333334" y="149.35" width="13.133333333333333" height="4.150000000000006" fill="#7c7c7c" stroke="#5a5a5a" stroke-width="0.5"/><rect x="748.7333333333333" y="151.32500000000002" width="2" height="2.575000000000003" fill="#22e022"/><path d="M751.1333333333333 151.625H760.4666666666667" stroke="#e0e0e0" stroke-width="1.6" stroke-dasharray="0.9 0.7"/><rect x="762.4666666666667" y="149.35" width="13.133333333333333" height="4.150000000000006" fill="#7c7c7c" stroke="#5a5a5a" stroke-width="0.5"/><rect x="762.8666666666667" y="151.32500000000002" width="2" height="2.575000000000003" fill="#22e022"/><path d="M765.2666666666667 151.625H774.6" stroke="#e0e0e0" stroke-width="1.6" stroke-dasharray="0.9 0.7"/><rect x="732.7" y="158" width="44.9" height="7" fill="#d9d9d9" stroke="#8f8f8f" stroke-width="0.7"/><path d="M734.7 160.3H757.3950000000001M734.7 162.7H757.3950000000001" stroke="#6a6a6a" stroke-width="1.4" stroke-dasharray="2.2 1"/><rect x="759.6400000000001" y="159.2" width="16.163999999999998" height="4.6" fill="#333"/><path d="M760.538 160.5H775.355M760.538 162.5H775.355" stroke="#22e022" stroke-width="1" stroke-dasharray="1 1"/><rect x="732.7" y="166.3" width="44.9" height="8.0" fill="#d9d9d9" stroke="#8f8f8f" stroke-width="0.7"/><path d="M734.7 168.8H760.538M734.7 170.3H760.538M734.7 171.8H760.538" stroke="#6a6a6a" stroke-width="1" stroke-dasharray="1 0.8"/><path d="M734.7 172.8H760.538" stroke="#22e022" stroke-width="1" stroke-dasharray="1 1"/><rect x="762.3340000000001" y="167.5" width="8.98" height="2.5" fill="#22e022"/><rect x="761.436" y="171.3" width="14.368" height="1.6" fill="#8a8a8a"/><rect x="732.7" y="176" width="44.9" height="7" fill="#d9d9d9" stroke="#8f8f8f" stroke-width="0.7"/><path d="M734.7 178.3H775.6M734.7 180.7H775.6" stroke="#6a6a6a" stroke-width="1.4" stroke-dasharray="2.2 1"/><rect x="732.7" y="185" width="44.9" height="12.699999999999989" fill="#d9d9d9" stroke="#8f8f8f" stroke-width="0.7"/><path d="M734.7 187.0H775.6" stroke="#777" stroke-width="0.9" stroke-dasharray="1.5 1"/><rect x="734.7" y="188.5" width="40.9" height="2.2" fill="#333"/><path d="M735.7 189.6H774.6" stroke="#22e022" stroke-width="1.5" stroke-dasharray="1.5 1.6"/><path d="M741.9000000000001 189.6H774.6" stroke="#f0d020" stroke-width="1.5" stroke-dasharray="1.5 11.7"/><path d="M734.7 191.85H775.6" stroke="#777" stroke-width="0.9" stroke-dasharray="1.5 1"/><rect x="734.7" y="193.35" width="40.9" height="2.2" fill="#333"/><path d="M735.7 194.45H774.6" stroke="#22e022" stroke-width="1.5" stroke-dasharray="1.5 1.6"/><path d="M741.9000000000001 194.45H774.6" stroke="#f0d020" stroke-width="1.5" stroke-dasharray="1.5 11.7"/><rect x="732.7" y="199.7" width="44.9" height="13.100000000000023" fill="#d9d9d9" stroke="#8f8f8f" stroke-width="0.7"/><path d="M734.7 201.7H775.6" stroke="#777" stroke-width="0.9" stroke-dasharray="1.5 1"/><rect x="734.7" y="203.2" width="40.9" height="2.2" fill="#333"/><path d="M735.7 204.29999999999998H774.6" stroke="#22e022" stroke-width="1.5" stroke-dasharray="1.5 1.6"/><path d="M741.9000000000001 204.29999999999998H774.6" stroke="#f0d020" stroke-width="1.5" stroke-dasharray="1.5 11.7"/><path d="M734.7 206.75H775.6" stroke="#777" stroke-width="0.9" stroke-dasharray="1.5 1"/><rect x="734.7" y="208.25" width="40.9" height="2.2" fill="#333"/><path d="M735.7 209.35H774.6" stroke="#22e022" stroke-width="1.5" stroke-dasharray="1.5 1.6"/><path d="M741.9000000000001 209.35H774.6" stroke="#f0d020" stroke-width="1.5" stroke-dasharray="1.5 11.7"/><rect x="732.7" y="214.7" width="44.9" height="13.100000000000023" fill="#d9d9d9" stroke="#8f8f8f" stroke-width="0.7"/><rect x="733.7" y="215.7" width="17.062" height="11.100000000000023" fill="#b4b4b4"/><path d="M735.2 216.5h3.6" stroke="#22e022" stroke-width="1.3"/><path d="M735.0 219.7h4M737.0 219.7v6" stroke="#333" stroke-width="1.8"/><path d="M740.4000000000001 216.5h3.6" stroke="#22e022" stroke-width="1.3"/><path d="M740.2 219.7h4M742.2 219.7v6" stroke="#333" stroke-width="1.8"/><path d="M745.6 216.5h3.6" stroke="#22e022" stroke-width="1.3"/><path d="M745.4 219.7h4M747.4 219.7v6" stroke="#333" stroke-width="1.8"/><path d="M752.9050000000001 217.2H763.2320000000001M752.9050000000001 219.0H763.2320000000001M752.9050000000001 220.79999999999998H763.2320000000001" stroke="#6a6a6a" stroke-width="1" stroke-dasharray="1 0.8"/><rect x="765.028" y="216.7" width="8.98" height="3.6" fill="#22e022" stroke="#555" stroke-width="0.5"/><circle cx="754.2520000000001" cy="224.3" r="1.1" fill="#666"/><circle cx="757.8520000000001" cy="224.3" r="1.1" fill="#666"/><circle cx="761.4520000000001" cy="224.3" r="1.1" fill="#666"/><path d="M774.6 220.8V226.8" stroke="#666" stroke-width="0.8" stroke-dasharray="0.8 1"/></g>
<g><path d="M849.5 139.2L853.3 131.8V221.5L849.5 228.5Z" fill="#9c9c9c" stroke="#161616" stroke-width="1.6" stroke-linejoin="bevel"/><path d="M849.5 144.8L853.3 141.3" stroke="#161616" stroke-width="1.4"/><path d="M849.5 156.0L853.3 152.5" stroke="#161616" stroke-width="1.4"/><path d="M849.5 167.20000000000002L853.3 163.70000000000002" stroke="#161616" stroke-width="1.4"/><path d="M849.5 178.4L853.3 174.9" stroke="#161616" stroke-width="1.4"/><path d="M849.5 189.60000000000002L853.3 186.10000000000002" stroke="#161616" stroke-width="1.4"/><path d="M849.5 200.8L853.3 197.3" stroke="#161616" stroke-width="1.4"/><path d="M849.5 212.0L853.3 208.5" stroke="#161616" stroke-width="1.4"/><path d="M849.5 223.2L853.3 219.7" stroke="#161616" stroke-width="1.4"/><path d="M800.5 139.5L809.5 132.10000000000002H853.1L849.5 139.5Z" fill="#ececec" stroke="#161616" stroke-width="1.7" stroke-linejoin="bevel"/><path d="M849.5 139.5L852.7 132.8V144.7L849.5 146.7Z" fill="#b8b8b8"/><rect x="799" y="138.7" width="50.5" height="89.80000000000001" fill="#161616"/><rect x="801.7" y="139.7" width="44.9" height="7.100000000000023" fill="#d9d9d9" stroke="#8f8f8f" stroke-width="0.7"/><rect x="803.2" y="140.7" width="10.327" height="5.100000000000023" fill="#22e022" stroke="#555" stroke-width="0.5"/><path d="M817.4150000000001 141.95H837.62M817.4150000000001 143.25H837.62M817.4150000000001 144.55H837.62" stroke="#777" stroke-width="0.8" stroke-dasharray="1.5 0.7"/><rect x="839.865" y="141.2" width="1.5" height="1.5" fill="#777"/><rect x="839.865" y="143.8" width="1.5" height="1.5" fill="#777"/><rect x="801.7" y="148.7" width="44.9" height="12.900000000000006" fill="#d9d9d9" stroke="#8f8f8f" stroke-width="0.7"/><rect x="803.2" y="149.89999999999998" width="13.469999999999999" height="9.400000000000006" fill="#1ab4f5"/><rect x="819.017" y="149.89999999999998" width="13.469999999999999" height="9.400000000000006" fill="#1ab4f5"/><rect x="833.13" y="149.89999999999998" width="11.674" height="9.400000000000006" fill="#b8b8b8"/><path d="M803.2 160.4H844.6" stroke="#555" stroke-width="1" stroke-dasharray="0.8 1"/><rect x="801.7" y="164" width="44.9" height="12.599999999999994" fill="#d9d9d9" stroke="#8f8f8f" stroke-width="0.7"/><path d="M803.7 166.5H827.7420000000001M803.7 170.3H827.7420000000001M803.7 174.1H827.7420000000001" stroke="#777" stroke-width="1.2" stroke-dasharray="1.6 1.6"/><rect x="830.436" y="165.5" width="14.817" height="2.5333333333333314" fill="#333"/><path d="M831.3340000000001 166.76666666666665H844.8040000000001" stroke="#22e022" stroke-width="1" stroke-dasharray="1 1"/><rect x="830.436" y="169.03333333333333" width="14.817" height="2.5333333333333314" fill="#333"/><path d="M831.3340000000001 170.3H844.8040000000001" stroke="#22e022" stroke-width="1" stroke-dasharray="1 1"/><rect x="830.436" y="172.56666666666666" width="14.817" height="2.5333333333333314" fill="#333"/><path d="M831.3340000000001 173.83333333333331H844.8040000000001" stroke="#22e022" stroke-width="1" stroke-dasharray="1 1"/><rect x="801.7" y="179" width="44.9" height="7" fill="#d9d9d9" stroke="#8f8f8f" stroke-width="0.7"/><path d="M804.7 182.5H844.6" stroke="#666" stroke-width="3.5" stroke-dasharray="1.5 2.5"/><path d="M804.7 184.0H844.6" stroke="#22e022" stroke-width="1.5" stroke-dasharray="1.5 2.5"/><rect x="801.7" y="188" width="44.9" height="24.80000000000001" fill="#d9d9d9" stroke="#8f8f8f" stroke-width="0.7"/><rect x="803.5" y="189" width="3.3899999999999997" height="22.80000000000001" fill="#7a7a7a" stroke="#555" stroke-width="0.4"/><path d="M805.195 191V204.8" stroke="#a8a8a8" stroke-width="1" stroke-dasharray="0.8 0.8"/><path d="M805.195 205.8V210.8" stroke="#22e022" stroke-width="1" stroke-dasharray="1 1"/><rect x="807.69" y="189" width="3.3899999999999997" height="22.80000000000001" fill="#7a7a7a" stroke="#555" stroke-width="0.4"/><path d="M809.3850000000001 191V204.8" stroke="#a8a8a8" stroke-width="1" stroke-dasharray="0.8 0.8"/><path d="M809.3850000000001 205.8V210.8" stroke="#22e022" stroke-width="1" stroke-dasharray="1 1"/><rect x="811.88" y="189" width="3.3899999999999997" height="22.80000000000001" fill="#7a7a7a" stroke="#555" stroke-width="0.4"/><path d="M813.575 191V204.8" stroke="#a8a8a8" stroke-width="1" stroke-dasharray="0.8 0.8"/><path d="M813.575 205.8V210.8" stroke="#22e022" stroke-width="1" stroke-dasharray="1 1"/><rect x="816.07" y="189" width="3.3899999999999997" height="22.80000000000001" fill="#7a7a7a" stroke="#555" stroke-width="0.4"/><path d="M817.7650000000001 191V204.8" stroke="#a8a8a8" stroke-width="1" stroke-dasharray="0.8 0.8"/><path d="M817.7650000000001 205.8V210.8" stroke="#22e022" stroke-width="1" stroke-dasharray="1 1"/><rect x="820.26" y="189" width="3.3899999999999997" height="22.80000000000001" fill="#7a7a7a" stroke="#555" stroke-width="0.4"/><path d="M821.955 191V204.8" stroke="#a8a8a8" stroke-width="1" stroke-dasharray="0.8 0.8"/><path d="M821.955 205.8V210.8" stroke="#22e022" stroke-width="1" stroke-dasharray="1 1"/><rect x="824.45" y="189" width="3.3899999999999997" height="22.80000000000001" fill="#7a7a7a" stroke="#555" stroke-width="0.4"/><path d="M826.1450000000001 191V204.8" stroke="#a8a8a8" stroke-width="1" stroke-dasharray="0.8 0.8"/><path d="M826.1450000000001 205.8V210.8" stroke="#22e022" stroke-width="1" stroke-dasharray="1 1"/><rect x="828.64" y="189" width="3.3899999999999997" height="22.80000000000001" fill="#7a7a7a" stroke="#555" stroke-width="0.4"/><path d="M830.335 191V204.8" stroke="#a8a8a8" stroke-width="1" stroke-dasharray="0.8 0.8"/><path d="M830.335 205.8V210.8" stroke="#22e022" stroke-width="1" stroke-dasharray="1 1"/><rect x="832.83" y="189" width="3.3899999999999997" height="22.80000000000001" fill="#7a7a7a" stroke="#555" stroke-width="0.4"/><path d="M834.5250000000001 191V204.8" stroke="#a8a8a8" stroke-width="1" stroke-dasharray="0.8 0.8"/><path d="M834.5250000000001 205.8V210.8" stroke="#22e022" stroke-width="1" stroke-dasharray="1 1"/><rect x="837.02" y="189" width="3.3899999999999997" height="22.80000000000001" fill="#7a7a7a" stroke="#555" stroke-width="0.4"/><path d="M838.715 191V204.8" stroke="#a8a8a8" stroke-width="1" stroke-dasharray="0.8 0.8"/><path d="M838.715 205.8V210.8" stroke="#22e022" stroke-width="1" stroke-dasharray="1 1"/><rect x="841.21" y="189" width="3.3899999999999997" height="22.80000000000001" fill="#7a7a7a" stroke="#555" stroke-width="0.4"/><path d="M842.9050000000001 191V204.8" stroke="#a8a8a8" stroke-width="1" stroke-dasharray="0.8 0.8"/><path d="M842.9050000000001 205.8V210.8" stroke="#22e022" stroke-width="1" stroke-dasharray="1 1"/><rect x="801.7" y="214.7" width="44.9" height="13.100000000000023" fill="#d9d9d9" stroke="#8f8f8f" stroke-width="0.7"/><rect x="802.7" y="215.7" width="17.062" height="11.100000000000023" fill="#b4b4b4"/><path d="M804.2 216.5h3.6" stroke="#22e022" stroke-width="1.3"/><path d="M804.0 219.7h4M806.0 219.7v6" stroke="#333" stroke-width="1.8"/><path d="M809.4000000000001 216.5h3.6" stroke="#22e022" stroke-width="1.3"/><path d="M809.2 219.7h4M811.2 219.7v6" stroke="#333" stroke-width="1.8"/><path d="M814.6 216.5h3.6" stroke="#22e022" stroke-width="1.3"/><path d="M814.4 219.7h4M816.4 219.7v6" stroke="#333" stroke-width="1.8"/><path d="M821.9050000000001 217.2H832.2320000000001M821.9050000000001 219.0H832.2320000000001M821.9050000000001 220.79999999999998H832.2320000000001" stroke="#6a6a6a" stroke-width="1" stroke-dasharray="1 0.8"/><rect x="834.028" y="216.7" width="8.98" height="3.6" fill="#22e022" stroke="#555" stroke-width="0.5"/><circle cx="823.2520000000001" cy="224.3" r="1.1" fill="#666"/><circle cx="826.8520000000001" cy="224.3" r="1.1" fill="#666"/><circle cx="830.4520000000001" cy="224.3" r="1.1" fill="#666"/><path d="M843.6 220.8V226.8" stroke="#666" stroke-width="0.8" stroke-dasharray="0.8 1"/></g>
<g><path d="M918.5 142.0L922.3 134.8V221.5L918.5 228.5Z" fill="#9c9c9c" stroke="#161616" stroke-width="1.6" stroke-linejoin="bevel"/><path d="M918.5 147.8L922.3 144.3" stroke="#161616" stroke-width="1.4"/><path d="M918.5 159.0L922.3 155.5" stroke="#161616" stroke-width="1.4"/><path d="M918.5 170.20000000000002L922.3 166.70000000000002" stroke="#161616" stroke-width="1.4"/><path d="M918.5 181.4L922.3 177.9" stroke="#161616" stroke-width="1.4"/><path d="M918.5 192.60000000000002L922.3 189.10000000000002" stroke="#161616" stroke-width="1.4"/><path d="M918.5 203.8L922.3 200.3" stroke="#161616" stroke-width="1.4"/><path d="M918.5 215.0L922.3 211.5" stroke="#161616" stroke-width="1.4"/><path d="M918.5 226.2L922.3 222.7" stroke="#161616" stroke-width="1.4"/><path d="M869.5 142.3L878.5 135.10000000000002H922.1L918.5 142.3Z" fill="#ececec" stroke="#161616" stroke-width="1.7" stroke-linejoin="bevel"/><path d="M918.5 142.3L921.7 135.8V147.5L918.5 149.5Z" fill="#b8b8b8"/><rect x="868" y="141.5" width="50.5" height="87.0" fill="#161616"/><rect x="870.7" y="142.9" width="44.9" height="12.900000000000006" fill="#d9d9d9" stroke="#8f8f8f" stroke-width="0.7"/><path d="M872.7 144.9H913.6" stroke="#777" stroke-width="0.9" stroke-dasharray="1.5 1"/><rect x="872.7" y="146.4" width="40.9" height="2.2" fill="#333"/><path d="M873.7 147.5H912.6" stroke="#22e022" stroke-width="1.5" stroke-dasharray="1.5 1.6"/><path d="M879.9000000000001 147.5H912.6" stroke="#f0d020" stroke-width="1.5" stroke-dasharray="1.5 11.7"/><path d="M872.7 149.85000000000002H913.6" stroke="#777" stroke-width="0.9" stroke-dasharray="1.5 1"/><rect x="872.7" y="151.35000000000002" width="40.9" height="2.2" fill="#333"/><path d="M873.7 152.45000000000002H912.6" stroke="#22e022" stroke-width="1.5" stroke-dasharray="1.5 1.6"/><path d="M879.9000000000001 152.45000000000002H912.6" stroke="#f0d020" stroke-width="1.5" stroke-dasharray="1.5 11.7"/><rect x="870.7" y="158.2" width="44.9" height="6.600000000000023" fill="#d9d9d9" stroke="#8f8f8f" stroke-width="0.7"/><rect x="872.7" y="160.0" width="14.817" height="1.5" fill="#888"/><rect x="872.7" y="162.60000000000002" width="3" height="0.8" fill="#888"/><rect x="894.048" y="159.39999999999998" width="20.205" height="4.200000000000022" fill="#333" rx="1"/><circle cx="895.844" cy="161.5" r="2" fill="#888"/><path d="M899.436 161.5H913.355" stroke="#22e022" stroke-width="3" stroke-dasharray="1 0.9"/><rect x="870.7" y="166.8" width="44.9" height="6.799999999999983" fill="#d9d9d9" stroke="#8f8f8f" stroke-width="0.7"/><path d="M873.7 170.2H913.6" stroke="#666" stroke-width="3.5" stroke-dasharray="1.5 2.5"/><path d="M873.7 171.7H913.6" stroke="#22e022" stroke-width="1.5" stroke-dasharray="1.5 2.5"/><rect x="870.7" y="175.8" width="44.9" height="12.899999999999977" fill="#d9d9d9" stroke="#8f8f8f" stroke-width="0.7"/><rect x="872.2" y="177.3" width="13.133333333333333" height="3.9499999999999886" fill="#7c7c7c" stroke="#5a5a5a" stroke-width="0.5"/><rect x="872.6" y="179.175" width="2" height="2.4749999999999943" fill="#22e022"/><path d="M875.0 179.475H884.3333333333334" stroke="#e0e0e0" stroke-width="1.6" stroke-dasharray="0.9 0.7"/><rect x="886.3333333333334" y="177.3" width="13.133333333333333" height="3.9499999999999886" fill="#7c7c7c" stroke="#5a5a5a" stroke-width="0.5"/><rect x="886.7333333333333" y="179.175" width="2" height="2.4749999999999943" fill="#22e022"/><path d="M889.1333333333333 179.475H898.4666666666667" stroke="#e0e0e0" stroke-width="1.6" stroke-dasharray="0.9 0.7"/><rect x="900.4666666666667" y="177.3" width="13.133333333333333" height="3.9499999999999886" fill="#7c7c7c" stroke="#5a5a5a" stroke-width="0.5"/><rect x="900.8666666666667" y="179.175" width="2" height="2.4749999999999943" fill="#22e022"/><path d="M903.2666666666667 179.475H912.6" stroke="#e0e0e0" stroke-width="1.6" stroke-dasharray="0.9 0.7"/><rect x="872.2" y="182.25" width="13.133333333333333" height="3.9499999999999886" fill="#7c7c7c" stroke="#5a5a5a" stroke-width="0.5"/><rect x="872.6" y="184.125" width="2" height="2.4749999999999943" fill="#22e022"/><path d="M875.0 184.42499999999998H884.3333333333334" stroke="#e0e0e0" stroke-width="1.6" stroke-dasharray="0.9 0.7"/><rect x="886.3333333333334" y="182.25" width="13.133333333333333" height="3.9499999999999886" fill="#7c7c7c" stroke="#5a5a5a" stroke-width="0.5"/><rect x="886.7333333333333" y="184.125" width="2" height="2.4749999999999943" fill="#22e022"/><path d="M889.1333333333333 184.42499999999998H898.4666666666667" stroke="#e0e0e0" stroke-width="1.6" stroke-dasharray="0.9 0.7"/><rect x="900.4666666666667" y="182.25" width="13.133333333333333" height="3.9499999999999886" fill="#7c7c7c" stroke="#5a5a5a" stroke-width="0.5"/><rect x="900.8666666666667" y="184.125" width="2" height="2.4749999999999943" fill="#22e022"/><path d="M903.2666666666667 184.42499999999998H912.6" stroke="#e0e0e0" stroke-width="1.6" stroke-dasharray="0.9 0.7"/><rect x="870.7" y="190.8" width="44.9" height="12.899999999999977" fill="#d9d9d9" stroke="#8f8f8f" stroke-width="0.7"/><rect x="872.2" y="192.3" width="13.133333333333333" height="3.9499999999999886" fill="#7c7c7c" stroke="#5a5a5a" stroke-width="0.5"/><rect x="872.6" y="194.175" width="2" height="2.4749999999999943" fill="#22e022"/><path d="M875.0 194.475H884.3333333333334" stroke="#e0e0e0" stroke-width="1.6" stroke-dasharray="0.9 0.7"/><rect x="886.3333333333334" y="192.3" width="13.133333333333333" height="3.9499999999999886" fill="#7c7c7c" stroke="#5a5a5a" stroke-width="0.5"/><rect x="886.7333333333333" y="194.175" width="2" height="2.4749999999999943" fill="#22e022"/><path d="M889.1333333333333 194.475H898.4666666666667" stroke="#e0e0e0" stroke-width="1.6" stroke-dasharray="0.9 0.7"/><rect x="900.4666666666667" y="192.3" width="13.133333333333333" height="3.9499999999999886" fill="#7c7c7c" stroke="#5a5a5a" stroke-width="0.5"/><rect x="900.8666666666667" y="194.175" width="2" height="2.4749999999999943" fill="#22e022"/><path d="M903.2666666666667 194.475H912.6" stroke="#e0e0e0" stroke-width="1.6" stroke-dasharray="0.9 0.7"/><rect x="872.2" y="197.25" width="13.133333333333333" height="3.9499999999999886" fill="#7c7c7c" stroke="#5a5a5a" stroke-width="0.5"/><rect x="872.6" y="199.125" width="2" height="2.4749999999999943" fill="#22e022"/><path d="M875.0 199.42499999999998H884.3333333333334" stroke="#e0e0e0" stroke-width="1.6" stroke-dasharray="0.9 0.7"/><rect x="886.3333333333334" y="197.25" width="13.133333333333333" height="3.9499999999999886" fill="#7c7c7c" stroke="#5a5a5a" stroke-width="0.5"/><rect x="886.7333333333333" y="199.125" width="2" height="2.4749999999999943" fill="#22e022"/><path d="M889.1333333333333 199.42499999999998H898.4666666666667" stroke="#e0e0e0" stroke-width="1.6" stroke-dasharray="0.9 0.7"/><rect x="900.4666666666667" y="197.25" width="13.133333333333333" height="3.9499999999999886" fill="#7c7c7c" stroke="#5a5a5a" stroke-width="0.5"/><rect x="900.8666666666667" y="199.125" width="2" height="2.4749999999999943" fill="#22e022"/><path d="M903.2666666666667 199.42499999999998H912.6" stroke="#e0e0e0" stroke-width="1.6" stroke-dasharray="0.9 0.7"/><rect x="870.7" y="205.8" width="44.9" height="6.799999999999983" fill="#d9d9d9" stroke="#8f8f8f" stroke-width="0.7"/><path d="M872.7 208.0H895.3950000000001M872.7 210.39999999999998H895.3950000000001" stroke="#6a6a6a" stroke-width="1.4" stroke-dasharray="2.2 1"/><rect x="897.6400000000001" y="207.0" width="16.163999999999998" height="4.399999999999983" fill="#333"/><path d="M898.538 208.2H913.355M898.538 210.2H913.355" stroke="#22e022" stroke-width="1" stroke-dasharray="1 1"/><rect x="870.7" y="214.8" width="44.9" height="12.899999999999977" fill="#d9d9d9" stroke="#8f8f8f" stroke-width="0.7"/><rect x="871.7" y="215.8" width="17.062" height="10.899999999999977" fill="#b4b4b4"/><path d="M873.2 216.60000000000002h3.6" stroke="#22e022" stroke-width="1.3"/><path d="M873.0 219.8h4M875.0 219.8v6" stroke="#333" stroke-width="1.8"/><path d="M878.4000000000001 216.60000000000002h3.6" stroke="#22e022" stroke-width="1.3"/><path d="M878.2 219.8h4M880.2 219.8v6" stroke="#333" stroke-width="1.8"/><path d="M883.6 216.60000000000002h3.6" stroke="#22e022" stroke-width="1.3"/><path d="M883.4 219.8h4M885.4 219.8v6" stroke="#333" stroke-width="1.8"/><path d="M890.9050000000001 217.3H901.2320000000001M890.9050000000001 219.10000000000002H901.2320000000001M890.9050000000001 220.9H901.2320000000001" stroke="#6a6a6a" stroke-width="1" stroke-dasharray="1 0.8"/><rect x="903.028" y="216.8" width="8.98" height="3.6" fill="#22e022" stroke="#555" stroke-width="0.5"/><circle cx="892.2520000000001" cy="224.2" r="1.1" fill="#666"/><circle cx="895.8520000000001" cy="224.2" r="1.1" fill="#666"/><circle cx="899.4520000000001" cy="224.2" r="1.1" fill="#666"/><path d="M912.6 220.7V226.7" stroke="#666" stroke-width="0.8" stroke-dasharray="0.8 1"/></g>
<path d="M295.6 408.4A11.6 11.6 0 0 1 310.5 390.5A19 19 0 0 1 337 386.6A23.5 23.5 0 0 1 370.2 386.2A19 19 0 0 1 397.2 390.2A11.6 11.6 0 0 1 412.6 408.4A11.6 11.6 0 0 1 397.2 427.2A22.5 22.5 0 0 1 370 431.1A22 22 0 0 1 337.8 431.1A22.5 22.5 0 0 1 309.7 427.2A11.6 11.6 0 0 1 295.6 408.4Z" fill="#edf1f7" stroke="#1f7ae8" stroke-width="2"/>
<path d="M775.6 408.4A11.6 11.6 0 0 1 790.5 390.5A19 19 0 0 1 817 386.6A23.5 23.5 0 0 1 850.2 386.2A19 19 0 0 1 877.2 390.2A11.6 11.6 0 0 1 892.6 408.4A11.6 11.6 0 0 1 877.2 427.2A22.5 22.5 0 0 1 850 431.1A22 22 0 0 1 817.8 431.1A22.5 22.5 0 0 1 789.7 427.2A11.6 11.6 0 0 1 775.6 408.4Z" fill="#edf1f7" stroke="#1f7ae8" stroke-width="2"/>
<text x="354" y="412.8" font-size="13.5" fill="#3a67a3" text-anchor="middle">Network-3</text>
<text x="834" y="412.8" font-size="13.5" fill="#3a67a3" text-anchor="middle">Network-2</text>
<rect x="290" y="379" width="128" height="60" fill="none" stroke="#ee1111" stroke-width="1.1"/><rect x="287" y="376" width="6" height="6" fill="#fff" stroke="#ee1111" stroke-width="1"/><rect x="287" y="406" width="6" height="6" fill="#fff" stroke="#ee1111" stroke-width="1"/><rect x="287" y="436" width="6" height="6" fill="#fff" stroke="#ee1111" stroke-width="1"/><rect x="351" y="376" width="6" height="6" fill="#fff" stroke="#ee1111" stroke-width="1"/><rect x="351" y="436" width="6" height="6" fill="#fff" stroke="#ee1111" stroke-width="1"/><rect x="415" y="376" width="6" height="6" fill="#fff" stroke="#ee1111" stroke-width="1"/><rect x="415" y="406" width="6" height="6" fill="#fff" stroke="#ee1111" stroke-width="1"/><rect x="415" y="436" width="6" height="6" fill="#fff" stroke="#ee1111" stroke-width="1"/>
<rect x="311.4" y="451.2" width="25.5" height="16.3" rx="2" fill="#333333"/><text x="324.15" y="463.2" font-size="10.8" fill="#fff" text-anchor="middle">37</text>
<rect x="341" y="451.2" width="25.5" height="16.3" rx="2" fill="#2fb52f"/><text x="353.75" y="463.2" font-size="10.8" fill="#fff" text-anchor="middle">17</text>
<rect x="371.2" y="451.2" width="25.5" height="16.3" rx="2" fill="#fcb6b6"/><text x="383.95" y="463.2" font-size="10.8" fill="#fff" text-anchor="middle">0</text>
<rect x="296" y="475.3" width="25.5" height="16.3" rx="2" fill="#2fb52f"/><text x="308.75" y="487.3" font-size="10.8" fill="#fff" text-anchor="middle">3</text>
<rect x="326" y="475.3" width="25.5" height="16.3" rx="2" fill="#f8dccc"/><text x="338.75" y="487.3" font-size="10.8" fill="#fff" text-anchor="middle">0</text>
<rect x="356" y="475.3" width="25.5" height="16.3" rx="2" fill="#fcb6b6"/><text x="368.75" y="487.3" font-size="10.8" fill="#fff" text-anchor="middle">0</text>
<rect x="386" y="475.3" width="25.5" height="16.3" rx="2" fill="#e8a9ef"/><text x="398.75" y="487.3" font-size="10.8" fill="#fff" text-anchor="middle">0</text>
<rect x="776" y="451" width="25.8" height="16.3" rx="2" fill="#2fb52f"/><text x="788.9" y="463" font-size="10.8" fill="#fff" text-anchor="middle">3</text>
<rect x="806" y="451" width="25.8" height="16.3" rx="2" fill="#f8dccc"/><text x="818.9" y="463" font-size="10.8" fill="#fff" text-anchor="middle">0</text>
<rect x="836" y="451" width="25.8" height="16.3" rx="2" fill="#fcb6b6"/><text x="848.9" y="463" font-size="10.8" fill="#fff" text-anchor="middle">0</text>
<rect x="866.2" y="451" width="25.8" height="16.3" rx="2" fill="#e8a9ef"/><text x="879.1" y="463" font-size="10.8" fill="#fff" text-anchor="middle">0</text>
<g font-family="Liberation Sans, sans-serif"><text x="554.5" y="162.5" font-size="8.6" font-weight="normal" fill="#000" stroke="#000" stroke-width="0.25" text-anchor="middle">PC-1</text>
<text x="610.5" y="162.5" font-size="8.6" font-weight="normal" fill="#000" stroke="#000" stroke-width="0.25" text-anchor="middle">PC-2</text>
<text x="669.5" y="162.5" font-size="8.6" font-weight="normal" fill="#000" stroke="#000" stroke-width="0.25" text-anchor="middle">PC-3</text>
<text x="554.5" y="254.5" font-size="8.6" font-weight="normal" fill="#000" stroke="#000" stroke-width="0.25" text-anchor="middle">PC-5</text>
<text x="610.5" y="254.5" font-size="8.6" font-weight="normal" fill="#000" stroke="#000" stroke-width="0.25" text-anchor="middle">PC-6</text>
<text x="669.5" y="254.5" font-size="8.6" font-weight="normal" fill="#000" stroke="#000" stroke-width="0.25" text-anchor="middle">PC-7</text>
<text x="360.5" y="247.7" font-size="9" font-weight="normal" fill="#000" stroke="#000" stroke-width="0.25" text-anchor="middle">Router</text>
<text x="618" y="455" font-size="9.3" font-weight="normal" fill="#000" stroke="#000" stroke-width="0.25" text-anchor="middle">VPN Server</text>
<text x="551.2" y="535.9" font-size="9.2" font-weight="bold" fill="#000" stroke="#000" stroke-width="0.12" text-anchor="middle">ZyXEL</text>
<text x="551.2" y="546.65" font-size="9.2" font-weight="bold" fill="#000" stroke="#000" stroke-width="0.12" text-anchor="middle">Keenetic 4G</text>
<text x="551.2" y="557.4" font-size="9.2" font-weight="bold" fill="#000" stroke="#000" stroke-width="0.12" text-anchor="middle">Ping: 0 мс</text>
<text x="551.2" y="568.15" font-size="9.2" font-weight="bold" fill="#000" stroke="#000" stroke-width="0.12" text-anchor="middle">ARP: 13 мс</text>
<text x="551.2" y="578.9" font-size="9.2" font-weight="bold" fill="#000" stroke="#000" stroke-width="0.12" text-anchor="middle">SNMP: 44д 2ч 18м</text>
<text x="331.3" y="647.2" font-size="9.2" font-weight="bold" fill="#17a017" stroke="#17a017" stroke-width="0.12" text-anchor="middle">Hudson</text>
<text x="331.2" y="658.2" font-size="9.2" font-weight="bold" fill="#17a017" stroke="#17a017" stroke-width="0.12" text-anchor="middle">Ping: 0 мс</text>
<text x="331.2" y="668.8000000000001" font-size="9.2" font-weight="bold" fill="#17a017" stroke="#17a017" stroke-width="0.12" text-anchor="middle">ARP: 9 мс</text>
<text x="331.2" y="679.4000000000001" font-size="9.2" font-weight="bold" fill="#17a017" stroke="#17a017" stroke-width="0.12" text-anchor="middle">DriveFreeSpace: 98,9 ГБ</text>
<rect x="358.8" y="652" width="6" height="6" fill="#17a017"/>
<rect x="358.8" y="662.4" width="6" height="6" fill="#17a017"/>
<rect x="390.8" y="673.2" width="6" height="6" fill="#17a017"/>
<text x="452.8" y="646.4" font-size="9.2" font-weight="bold" fill="#000" stroke="#000" stroke-width="0.12" text-anchor="middle">HP Laser Jet</text>
<text x="786" y="554.1" font-size="9.2" font-weight="bold" fill="#000" stroke="#000" stroke-width="0.12" text-anchor="start">Creator</text>
<text x="786" y="564.74" font-size="9.2" font-weight="bold" fill="#000" stroke="#000" stroke-width="0.12" text-anchor="start">Ping: 0 мс</text>
<text x="786" y="575.38" font-size="9.2" font-weight="bold" fill="#000" stroke="#000" stroke-width="0.12" text-anchor="start">DriveFreeSpace: 41,6 ГБ</text>
<text x="786" y="586.02" font-size="9.2" font-weight="bold" fill="#000" stroke="#000" stroke-width="0.12" text-anchor="start">ARP: 0 мс</text>
<text x="786" y="596.6600000000001" font-size="9.2" font-weight="bold" fill="#000" stroke="#000" stroke-width="0.12" text-anchor="start">Free Memory: 5063 МБ</text>
<text x="786" y="607.3000000000001" font-size="9.2" font-weight="bold" fill="#000" stroke="#000" stroke-width="0.12" text-anchor="start">WMI_IP: 192.168.1.2</text>
<text x="674" y="634.2" font-size="9.2" font-weight="bold" fill="#000" stroke="#000" stroke-width="0.12" text-anchor="start">Leo</text>
<text x="674" y="645.0500000000001" font-size="9.2" font-weight="bold" fill="#000" stroke="#000" stroke-width="0.12" text-anchor="start">Ping: 0 мс</text>
<text x="674" y="655.9000000000001" font-size="9.2" font-weight="bold" fill="#000" stroke="#000" stroke-width="0.12" text-anchor="start">ARP: 0 мс</text></g>
</svg>
<div class="ph" style="left:943px;top:67px;width:256px">Свойства</div>
<div class="a" style="left:1191px;top:90px;width:6px;height:294px;border-radius:3px;background:#eeeeee"></div>
<div class="a" style="left:1191px;top:90px;width:6px;height:100px;border-radius:3px;background:#c9c9c9"></div>
<div class="t" style="left:955px;top:102px;font-weight:bold;font-size:11.6px">Геометрия</div>
<div class="t" style="left:962px;top:131px;font-size:12px">X</div>
<div class="t" style="left:962px;top:167px;font-size:12px">Y</div>
<div class="t" style="left:1077px;top:131px;font-size:12px">Ш</div>
<div class="t" style="left:1078px;top:167px;font-size:12px">В</div>
<div class="a" style="left:979px;top:125px;width:64px;height:24px;border:1px solid #d4d4d4;background:#fff;text-align:center;font-size:11.5px;line-height:22px;color:#1b1b1b">32</div>
<div class="a" style="left:979px;top:161px;width:64px;height:24px;border:1px solid #d4d4d4;background:#fff;text-align:center;font-size:11.5px;line-height:22px;color:#1b1b1b">216</div>
<div class="a" style="left:1095px;top:125px;width:64px;height:24px;border:1px solid #d4d4d4;background:#fff;text-align:center;font-size:11.5px;line-height:22px;color:#1b1b1b">128</div>
<div class="a" style="left:1095px;top:161px;width:64px;height:24px;border:1px solid #d4d4d4;background:#fff;text-align:center;font-size:11.5px;line-height:22px;color:#1b1b1b">60</div>
<svg class="a" style="left:943px;top:67px" width="256" height="320">
 <path d="M124.5 82v-11.5h3.5M124.5 97v9.5h3.5" fill="none" stroke="#c4c4c4" stroke-width="1"/>
 <rect x="121" y="88" width="6.8" height="4.8" fill="#8a8a8a"/>
 <path d="M125.5 88v-2a2.3 2.3 0 0 1 4.6 0v2.2" fill="none" stroke="#8a8a8a" stroke-width="1.1"/>
 <rect x="224.5" y="78.5" width="19.5" height="19.5" fill="#f6f6f6" stroke="#d6d6d6" stroke-width="1"/>
 <path d="M228.5 84v-2.5h2.5M237 81.5h2.5v2.5M239.5 91v2.5h-2.5M231 93.5h-2.5v-2.5" fill="none" stroke="#1e2228" stroke-width="1"/>
 <rect x="228.5" y="88" width="5.5" height="5.5" fill="#1e2228"/>
 <path d="M233 89l6-6M235 82.5h4.5v4.5" fill="none" stroke="#1e2228" stroke-width="1.2"/>
</svg>
<div class="hl" style="left:943px;top:201px;width:248px"></div>
<div class="t" style="left:955px;top:214px;font-weight:bold;font-size:11.6px">Выравнивание</div>
<div class="hl" style="left:943px;top:314px;width:248px"></div>
<div class="t" style="left:955px;top:327px;font-weight:bold;font-size:11.6px">Стиль</div>
<svg class="a" style="left:955px;top:238px" width="230" height="62"><g transform="translate(0,0)"><rect x="0.5" y="0.5" width="23" height="23" fill="#f7f7f7" stroke="#d6d6d6"/><rect x="4" y="4" width="1.1" height="1.1" fill="#1e2228"/><rect x="4" y="19" width="1.1" height="1.1" fill="#1e2228"/><rect x="7" y="4" width="1.1" height="1.1" fill="#1e2228"/><rect x="7" y="19" width="1.1" height="1.1" fill="#1e2228"/><rect x="10" y="4" width="1.1" height="1.1" fill="#1e2228"/><rect x="10" y="19" width="1.1" height="1.1" fill="#1e2228"/><rect x="13" y="4" width="1.1" height="1.1" fill="#1e2228"/><rect x="13" y="19" width="1.1" height="1.1" fill="#1e2228"/><rect x="16" y="4" width="1.1" height="1.1" fill="#1e2228"/><rect x="16" y="19" width="1.1" height="1.1" fill="#1e2228"/><rect x="19" y="4" width="1.1" height="1.1" fill="#1e2228"/><rect x="19" y="19" width="1.1" height="1.1" fill="#1e2228"/><rect x="4" y="7" width="1.1" height="1.1" fill="#1e2228"/><rect x="19" y="7" width="1.1" height="1.1" fill="#1e2228"/><rect x="4" y="10" width="1.1" height="1.1" fill="#1e2228"/><rect x="19" y="10" width="1.1" height="1.1" fill="#1e2228"/><rect x="4" y="13" width="1.1" height="1.1" fill="#1e2228"/><rect x="19" y="13" width="1.1" height="1.1" fill="#1e2228"/><rect x="4" y="16" width="1.1" height="1.1" fill="#1e2228"/><rect x="19" y="16" width="1.1" height="1.1" fill="#1e2228"/><rect x="7" y="7" width="10" height="10" fill="none" stroke="#1e2228" stroke-width="2"/><rect x="10" y="10" width="1" height="1" fill="#1e2228"/><rect x="13" y="10" width="1" height="1" fill="#1e2228"/><rect x="10" y="13" width="1" height="1" fill="#1e2228"/><rect x="13" y="13" width="1" height="1" fill="#1e2228"/></g><g transform="translate(40,0)"><rect x="0.5" y="0.5" width="23" height="23" fill="#f7f7f7" stroke="#d6d6d6"/><rect x="4" y="4" width="1.6" height="16" fill="#979797"/><rect x="7.5" y="7.5" width="7" height="3" fill="none" stroke="#979797" stroke-width="1"/><rect x="7" y="13" width="12" height="3.5" fill="#979797"/></g><g transform="translate(80,0)"><rect x="0.5" y="0.5" width="23" height="23" fill="#f7f7f7" stroke="#d6d6d6"/><rect x="4" y="4" width="16" height="1.6" fill="#979797"/><rect x="7" y="7" width="3.5" height="12" fill="#979797"/><rect x="13.5" y="7.5" width="3" height="7" fill="none" stroke="#979797" stroke-width="1"/></g><g transform="translate(120,0)"><rect x="0.5" y="0.5" width="23" height="23" fill="#f7f7f7" stroke="#d6d6d6"/><rect x="11.3" y="4" width="1.6" height="16" fill="#979797"/><rect x="8.5" y="7.5" width="7" height="3" fill="none" stroke="#979797" stroke-width="1"/><rect x="6" y="13" width="12" height="3.5" fill="#979797"/></g><g transform="translate(160,0)"><rect x="0.5" y="0.5" width="23" height="23" fill="#f7f7f7" stroke="#d6d6d6"/><rect x="11.3" y="4" width="1.6" height="16" fill="#979797"/><rect x="8.5" y="4.5" width="7" height="3" fill="none" stroke="#979797" stroke-width="1"/><rect x="6" y="10" width="12" height="3.5" fill="#979797"/><rect x="8.5" y="17.0" width="7" height="3" fill="none" stroke="#979797" stroke-width="1"/></g><g transform="translate(200,0)"><rect x="0.5" y="0.5" width="23" height="23" fill="#f7f7f7" stroke="#d6d6d6"/><rect x="11.3" y="4" width="1.6" height="16" fill="#979797"/><rect x="6" y="8" width="3.5" height="8" fill="#979797"/><rect x="14.5" y="8.5" width="3" height="6" fill="none" stroke="#979797" stroke-width="1"/></g><g transform="translate(40,36)"><rect x="0.5" y="0.5" width="23" height="23" fill="#f7f7f7" stroke="#d6d6d6"/><rect x="18.4" y="4" width="1.6" height="16" fill="#979797"/><rect x="9.5" y="8.5" width="7" height="3" fill="none" stroke="#979797" stroke-width="1"/><rect x="5" y="13" width="12" height="3.5" fill="#979797"/></g><g transform="translate(80,36)"><rect x="0.5" y="0.5" width="23" height="23" fill="#f7f7f7" stroke="#d6d6d6"/><rect x="4" y="18.4" width="16" height="1.6" fill="#979797"/><rect x="7.5" y="9.5" width="3" height="7" fill="none" stroke="#979797" stroke-width="1"/><rect x="13" y="5" width="3.5" height="12" fill="#979797"/></g><g transform="translate(120,36)"><rect x="0.5" y="0.5" width="23" height="23" fill="#f7f7f7" stroke="#d6d6d6"/><rect x="4" y="11.3" width="16" height="1.6" fill="#979797"/><rect x="7.5" y="8.5" width="3" height="7" fill="none" stroke="#979797" stroke-width="1"/><rect x="13" y="6" width="3.5" height="12" fill="#979797"/></g><g transform="translate(160,36)"><rect x="0.5" y="0.5" width="23" height="23" fill="#f7f7f7" stroke="#d6d6d6"/><rect x="4" y="11.3" width="16" height="1.6" fill="#979797"/><rect x="4.5" y="8.5" width="3" height="7" fill="none" stroke="#979797" stroke-width="1"/><rect x="10" y="6" width="3.5" height="12" fill="#979797"/><rect x="17.0" y="8.5" width="3" height="7" fill="none" stroke="#979797" stroke-width="1"/></g><g transform="translate(200,36)"><rect x="0.5" y="0.5" width="23" height="23" fill="#f7f7f7" stroke="#d6d6d6"/><rect x="4" y="11" width="16" height="1.6" fill="#979797"/><rect x="8" y="6" width="8" height="3.5" fill="#979797"/><rect x="8.5" y="14.5" width="7" height="3" fill="none" stroke="#979797" stroke-width="1"/></g></svg>
<svg class="a" style="left:955px;top:351px" width="200" height="24"><g transform="translate(0,0)"><rect x="0.5" y="0.5" width="23" height="23" fill="#f7f7f7" stroke="#d6d6d6"/><rect x="4.5" y="4.5" width="15" height="15" fill="none" stroke="#2b2f36" stroke-width="1.3"/></g><g transform="translate(40,0)"><rect x="0.5" y="0.5" width="23" height="23" fill="#f7f7f7" stroke="#d6d6d6"/><circle cx="12" cy="12" r="7.6" fill="none" stroke="#2b2f36" stroke-width="1.2"/></g><g transform="translate(80,0)"><rect x="0.5" y="0.5" width="23" height="23" fill="#f7f7f7" stroke="#d6d6d6"/><path d="M4 12l4-7h8l4 7-4 7h-8z" fill="none" stroke="#2b2f36" stroke-width="1.2"/></g><g transform="translate(120,0)"><rect x="0.5" y="0.5" width="23" height="23" fill="#e9f3fd" stroke="#1a8cff"/><path d="M6.5 16.5a2.6 2.6 0 0 1-0.5-5.1 4 4 0 0 1 7.6-1.8 3.2 3.2 0 0 1 4.5 2.2 2.4 2.4 0 0 1 0.3 4.7z" fill="none" stroke="#2b2f36" stroke-width="1.1"/></g><g transform="translate(160,0)"><rect x="0.5" y="0.5" width="23" height="23" fill="#f7f7f7" stroke="#d6d6d6"/><path d="M11.80 4.00L13.71 6.98L17.17 6.23L16.42 9.69L19.40 11.60L16.42 13.51L17.17 16.97L13.71 16.22L11.80 19.20L9.89 16.22L6.43 16.97L7.18 13.51L4.20 11.60L7.18 9.69L6.43 6.23L9.89 6.98Z" fill="none" stroke="#2b2f36" stroke-width="1.1"/></g></svg>
<div class="ph" style="left:943px;top:386px;width:256px">Слои</div>
<svg class="a" style="left:943px;top:408px" width="256" height="33">
 <rect x="9.6" y="9.6" width="13.8" height="13.8" fill="none" stroke="#2b2f36" stroke-width="1.3"/>
 <path d="M16.5 12.5v8M12.5 16.5h8" stroke="#2b2f36" stroke-width="2"/>
 <rect x="38.6" y="14.6" width="8.8" height="8.8" rx="0.8" fill="#fff" stroke="#2b2f36" stroke-width="1.2"/>
 <rect x="41.6" y="11.6" width="8.8" height="8.8" rx="0.8" fill="#fff" stroke="#2b2f36" stroke-width="1.2"/>
 <rect x="44" y="8" width="10" height="9.6" rx="0.8" fill="#2b2f36"/>
 <rect x="68" y="14" width="9.6" height="10" rx="0.8" fill="#2b2f36"/>
 <rect x="71.6" y="11.6" width="8.8" height="8.8" rx="0.8" fill="#fff" stroke="#2b2f36" stroke-width="1.2"/>
 <rect x="74.6" y="8.6" width="9" height="8.8" rx="0.8" fill="#fff" stroke="#2b2f36" stroke-width="1.2"/>
 <path d="M99 11.5h14M103.5 11v-2h5v2" fill="none" stroke="#2b2f36" stroke-width="1.5"/>
 <path d="M100.6 12.5v10.5h10.8v-10.5M104.5 14v7M108 14v7" fill="none" stroke="#2b2f36" stroke-width="1.2"/>
</svg>
<div class="hl" style="left:943px;top:440px;width:256px"></div>
<div class="t" style="left:948px;top:445px;font-style:italic;color:#6e6e6e;font-size:11px">Search</div>
<svg class="a" style="left:1142px;top:441px" width="57" height="21">
 <circle cx="21.5" cy="9" r="3.8" fill="none" stroke="#6f6f6f" stroke-width="2"/>
 <path d="M24 11.5l2.5 2.5" stroke="#6f6f6f" stroke-width="2.2"/>
 <path d="M36.5 0v21" stroke="#d2d2d2" stroke-width="1"/>
 <path d="M42 6l3.5 3 3.5-3M42 10.5l3.5 3 3.5-3" fill="none" stroke="#6f6f6f" stroke-width="1.4"/>
</svg>
<div class="hl" style="left:943px;top:461px;width:256px"></div>
<div class="a" style="left:1191px;top:464px;width:6px;height:269px;border-radius:3px;background:#eeeeee"></div>
<div class="a" style="left:1191px;top:464px;width:6px;height:155px;border-radius:3px;background:#c9c9c9"></div>
<div class="t" style="left:963px;top:471.0px;font-weight:bold;">server</div>
<div class="t" style="left:963px;top:493.0px;font-weight:bold;">computers</div>
<div class="t" style="left:963px;top:515.0px;font-weight:bold;">rack</div>
<div class="t" style="left:981px;top:537.0px;font-weight:bold;">rack-3</div>
<div class="t" style="left:981px;top:559.0px;font-weight:bold;">rack-2</div>
<div class="t" style="left:981px;top:581.0px;font-weight:bold;">rack-1</div>
<div class="t" style="left:1017px;top:602.5px;font-size:11.2px">Rack NAS</div>
<div class="t" style="left:1017px;top:624.5px;font-size:11.2px">Rack switch</div>
<div class="t" style="left:1017px;top:646.5px;font-size:11.2px">Rack server</div>
<div class="t" style="left:1017px;top:668.5px;font-size:11.2px">Rack patch panel</div>
<div class="t" style="left:1017px;top:690.5px;font-size:11.2px">Rack multiplexer</div>
<div class="t" style="left:1017px;top:712.5px;font-size:11.2px">Rack multiplexer</div>
<svg class="a" style="left:0;top:0" width="1200" height="768"><path d="M952 473.5v8l4-4z" fill="#2b2f36"/><path d="M952 495.5v8l4-4z" fill="#2b2f36"/><path d="M951.5 525.0h7v-7z" fill="#2b2f36"/><path d="M970.5 539.5v8l4-4z" fill="#2b2f36"/><path d="M970.5 561.5v8l4-4z" fill="#2b2f36"/><path d="M970.0 591.0h7v-7z" fill="#2b2f36"/><path d="M993.5 606.5L996 604.0H1013.5L1011 606.5Z" fill="#ececec" stroke="#3a3a3a" stroke-width="0.8"/><path d="M1011 606.5L1013.5 604.0V610.4999999999999L1011 612.6999999999999Z" fill="#666" stroke="#3a3a3a" stroke-width="0.8"/><rect x="993.5" y="606.5" width="17.5" height="6.199999999999932" fill="#9c9c9c" stroke="#3a3a3a" stroke-width="0.8"/><path d="M995 608.3H1010M995 610.8H1010" stroke="#d8d8d8" stroke-width="0.9" stroke-dasharray="1 0.7"/><path d="M995 607.8V611.8M999.5 607.8V611.8M1004 607.8V611.8" stroke="#22dd22" stroke-width="1" stroke-dasharray="1.2 1.4"/><path d="M993.5 629.5L996 627.6H1013.5L1011 629.5Z" fill="#ececec" stroke="#3a3a3a" stroke-width="0.8"/><path d="M1011 629.5L1013.5 627.6V631.6L1011 633.8000000000001Z" fill="#666" stroke="#3a3a3a" stroke-width="0.8"/><rect x="993.5" y="629.5" width="17.5" height="4.300000000000068" fill="#a8a8a8" stroke="#3a3a3a" stroke-width="0.8"/><rect x="1005" y="630.7" width="5" height="2" fill="#1c6b1c"/><path d="M995 631.7H1004" stroke="#777" stroke-width="0.9" stroke-dasharray="1 0.6"/><path d="M993.5 651.3L996 649.4H1013.5L1011 651.3Z" fill="#ececec" stroke="#3a3a3a" stroke-width="0.8"/><path d="M1011 651.3L1013.5 649.4V653.4L1011 655.6Z" fill="#666" stroke="#3a3a3a" stroke-width="0.8"/><rect x="993.5" y="651.3" width="17.5" height="4.300000000000068" fill="#b4b4b4" stroke="#3a3a3a" stroke-width="0.8"/><path d="M994.5 654.9H1002" stroke="#22dd22" stroke-width="0.9"/><rect x="1007" y="652.1" width="2" height="1.6" fill="#22dd22"/><path d="M1000 653.0H1006" stroke="#888" stroke-width="0.8"/><path d="M993.5 673.4L996 671.5H1013.5L1011 673.4Z" fill="#ececec" stroke="#3a3a3a" stroke-width="0.8"/><path d="M1011 673.4L1013.5 671.5V675.5L1011 677.7Z" fill="#666" stroke="#3a3a3a" stroke-width="0.8"/><rect x="993.5" y="673.4" width="17.5" height="4.300000000000068" fill="#b8b8b8" stroke="#3a3a3a" stroke-width="0.8"/><path d="M996 675.3000000000001H1009" stroke="#8a8a8a" stroke-width="0.8" stroke-dasharray="1 0.6"/><path d="M993.5 694.5L996 692.0H1013.5L1011 694.5Z" fill="#ececec" stroke="#3a3a3a" stroke-width="0.8"/><path d="M1011 694.5L1013.5 692.0V698.5999999999999L1011 700.8Z" fill="#666" stroke="#3a3a3a" stroke-width="0.8"/><rect x="993.5" y="694.5" width="17.5" height="6.2999999999999545" fill="#94a894" stroke="#3a3a3a" stroke-width="0.8"/><path d="M994.5 696.0H1010M994.5 699.0H1010" stroke="#22dd22" stroke-width="1.3"/><path d="M997 696.0H1008M997 699.0H1008" stroke="#e8d020" stroke-width="1.3" stroke-dasharray="1 4.5"/><path d="M993.5 716.5L996 714.0H1013.5L1011 716.5Z" fill="#ececec" stroke="#3a3a3a" stroke-width="0.8"/><path d="M1011 716.5L1013.5 714.0V720.5999999999999L1011 722.8Z" fill="#666" stroke="#3a3a3a" stroke-width="0.8"/><rect x="993.5" y="716.5" width="17.5" height="6.2999999999999545" fill="#94a894" stroke="#3a3a3a" stroke-width="0.8"/><path d="M994.5 718.0H1010M994.5 721.0H1010" stroke="#22dd22" stroke-width="1.3"/><path d="M997 718.0H1008M997 721.0H1008" stroke="#e8d020" stroke-width="1.3" stroke-dasharray="1 4.5"/></svg>
<!-- status bar -->
<div class="hl" style="left:0;top:735px;width:1200px"></div>
<div class="t" style="left:10px;top:745.3px;font-size:11.5px">Мониторинг: 0</div>
<div class="t" style="left:265px;top:745.3px;font-size:11.5px">Выделено: 1</div>
<div class="t" style="left:528px;top:745.3px;font-size:11.5px">Устройства:</div>
<div class="badge" style="left:598px;top:743px;width:32px;background:#333">694</div>
<div class="badge" style="left:634px;top:743px;width:32px;background:#2eb62e">55</div>
<div class="badge" style="left:670px;top:743px;width:32px;background:#f44b4b">4</div>
<div class="t" style="left:744px;top:745.3px;font-size:11.5px">События:</div>
<div class="badge" style="left:802px;top:743px;width:32px;background:#2eb62e">3</div>
<div class="badge" style="left:838px;top:743px;width:32px;background:#cfcfcf">0</div>
<div class="badge" style="left:874px;top:743px;width:32px;background:#cfcfcf">0</div>
<div class="badge" style="left:910px;top:743px;width:32px;background:#cfcfcf">0</div>
<svg class="a" style="left:1155px;top:740px" width="30" height="24">
 <path d="M8.5 14.5v-4.5a5.5 5.5 0 0 1 11 0v4.5" fill="none" stroke="#8a8a8a" stroke-width="1.8"/>
 <path d="M6 14.5h16v1.5h-16z" fill="#8a8a8a"/>
 <path d="M12 16h4l-2 2z" fill="#8a8a8a"/>
</svg>
<svg class="a"  style="left:0;top:67px" width="1200" height="330">
 <path d="M242 7l8 8M250 7l-8 8" stroke="#8c8c8c" stroke-width="1"/>
 <path d="M1184 7l8 8M1192 7l-8 8" stroke="#8c8c8c" stroke-width="1"/>
 <path d="M1184 326l8 8M1192 326l-8 8" stroke="#8c8c8c" stroke-width="1"/>
</svg>
</body></html>
